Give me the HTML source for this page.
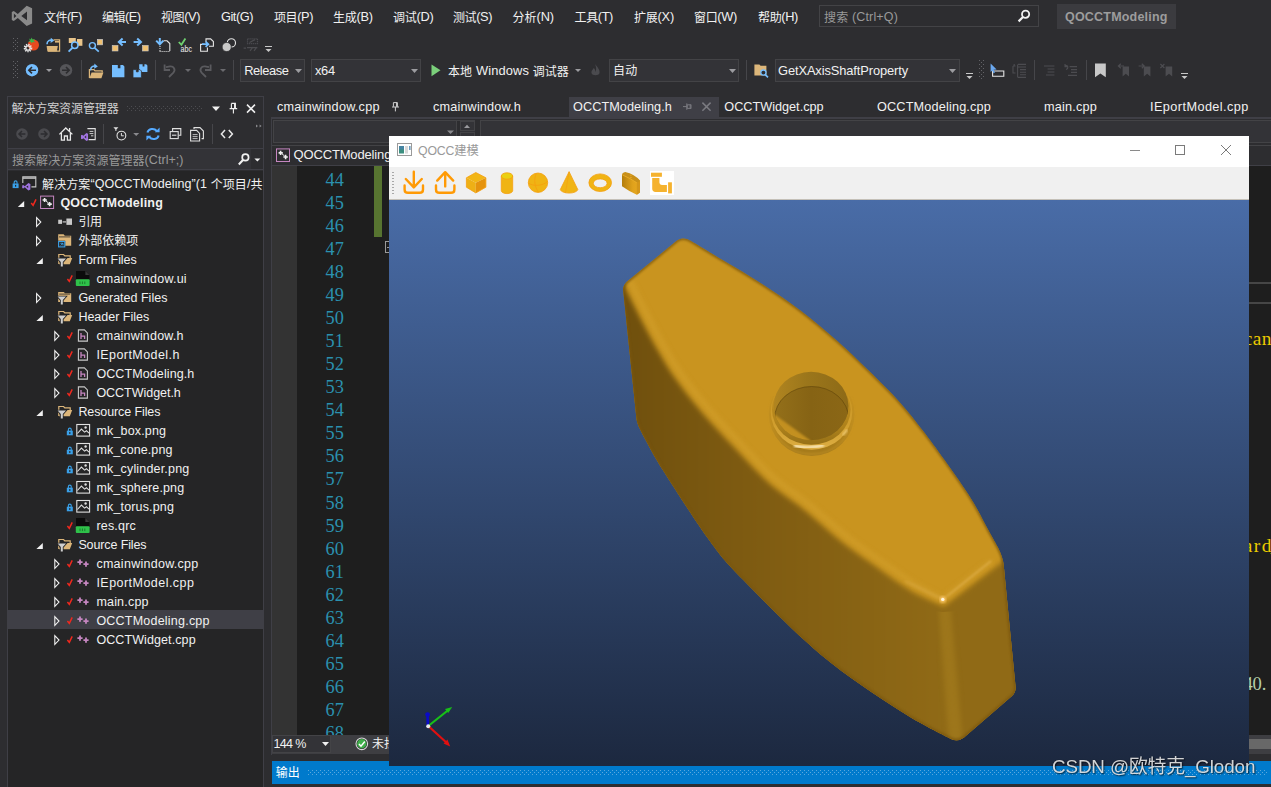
<!DOCTYPE html>
<html lang="zh-CN">
<head>
<meta charset="utf-8">
<title>QOCCTModeling - Microsoft Visual Studio</title>
<style>
html,body{margin:0;padding:0;}
body{width:1271px;height:787px;overflow:hidden;background:#2d2d30;position:relative;
  font-family:"Liberation Sans","Noto Sans CJK SC",sans-serif;font-size:12px;color:#f1f1f1;}
.abs{position:absolute;}
.t{position:absolute;white-space:nowrap;line-height:16px;height:16px;}
svg{position:absolute;overflow:visible;}
/* menu */
#menubar .t{top:8px;font-size:12px;color:#f1f1f1;}
/* tree */
#tree .t{font-size:12.5px;color:#f1f1f1;}
.ln{position:absolute;left:300px;width:44px;text-align:right;font-family:"Liberation Serif",serif;font-size:18.3px;letter-spacing:0.1px;line-height:23px;height:23px;color:#2b91af;}
</style>
</head>
<body>
<div id="menubar">
<svg style="left:0;top:0" width="40" height="32" viewBox="0 0 40 32"><path fill="#8a8a8a" fill-rule="evenodd" d="M26.7 5.7 L32.1 8.3 L32.1 23.6 L26.7 26.1 L17.8 17.9 L13.8 21 L11.8 20 L11.8 11.9 L13.8 10.9 L17.8 14 Z M27 11.6 L27 20.3 L21.3 15.95 Z M13.9 13.6 L13.9 18.3 L16.4 15.95 Z"/></svg><div class="abs" style="left:819px;top:5px;width:218px;height:20px;border:1px solid #434346;background:#2d2d30;"></div>
<svg style="left:1017px;top:9px" width="14" height="14" viewBox="0 0 14 14"><circle cx="8.6" cy="5.2" r="3.6" fill="none" stroke="#f1f1f1" stroke-width="1.8"/><path d="M6.2 7.8 L1.6 12.4" stroke="#f1f1f1" stroke-width="2.2"/></svg>
<div class="abs" style="left:1057px;top:4px;width:119px;height:25px;background:#3b3b3f;"></div><div class="t" style="left:44.0px;top:8.1px;font-size:12.8px;line-height:18px;height:18px;color:#f1f1f1;letter-spacing:-0.552px;"><span style="font-size:12px;position:relative;top:1px">文件</span>(F)</div>
<div class="t" style="left:102.0px;top:8.1px;font-size:12.8px;line-height:18px;height:18px;color:#f1f1f1;letter-spacing:-0.516px;"><span style="font-size:12px;position:relative;top:1px">编辑</span>(E)</div>
<div class="t" style="left:161.0px;top:8.1px;font-size:12.8px;line-height:18px;height:18px;color:#f1f1f1;letter-spacing:-0.416px;"><span style="font-size:12px;position:relative;top:1px">视图</span>(V)</div>
<div class="t" style="left:221.0px;top:7.7px;font-size:12.8px;line-height:18px;height:18px;color:#f1f1f1;letter-spacing:-0.474px;">Git(G)</div>
<div class="t" style="left:274.0px;top:8.1px;font-size:12.8px;line-height:18px;height:18px;color:#f1f1f1;letter-spacing:-0.416px;"><span style="font-size:12px;position:relative;top:1px">项目</span>(P)</div>
<div class="t" style="left:333.0px;top:8.1px;font-size:12.8px;line-height:18px;height:18px;color:#f1f1f1;letter-spacing:-0.296px;"><span style="font-size:12px;position:relative;top:1px">生成</span>(B)</div>
<div class="t" style="left:393.0px;top:8.1px;font-size:12.8px;line-height:18px;height:18px;color:#f1f1f1;letter-spacing:-0.256px;"><span style="font-size:12px;position:relative;top:1px">调试</span>(D)</div>
<div class="t" style="left:453.0px;top:8.1px;font-size:12.8px;line-height:18px;height:18px;color:#f1f1f1;letter-spacing:-0.416px;"><span style="font-size:12px;position:relative;top:1px">测试</span>(S)</div>
<div class="t" style="left:512.6px;top:8.1px;font-size:12.8px;line-height:18px;height:18px;color:#f1f1f1;letter-spacing:-0.076px;"><span style="font-size:12px;position:relative;top:1px">分析</span>(N)</div>
<div class="t" style="left:574.5px;top:8.1px;font-size:12.8px;line-height:18px;height:18px;color:#f1f1f1;letter-spacing:-0.372px;"><span style="font-size:12px;position:relative;top:1px">工具</span>(T)</div>
<div class="t" style="left:634.0px;top:8.1px;font-size:12.8px;line-height:18px;height:18px;color:#f1f1f1;letter-spacing:-0.216px;"><span style="font-size:12px;position:relative;top:1px">扩展</span>(X)</div>
<div class="t" style="left:694.0px;top:8.1px;font-size:12.8px;line-height:18px;height:18px;color:#f1f1f1;letter-spacing:-0.325px;"><span style="font-size:12px;position:relative;top:1px">窗口</span>(W)</div>
<div class="t" style="left:758.0px;top:8.1px;font-size:12.8px;line-height:18px;height:18px;color:#f1f1f1;letter-spacing:-0.356px;"><span style="font-size:12px;position:relative;top:1px">帮助</span>(H)</div>
<div class="t" style="left:824.0px;top:7.5px;font-size:12.5px;line-height:18px;height:18px;color:#999999;letter-spacing:0.156px;"><span style="font-size:12px;position:relative;top:1px">搜索</span> (Ctrl+Q)</div>
<div class="t" style="left:1065.0px;top:7.5px;font-size:12.5px;line-height:18px;height:18px;color:#9d9d9d;letter-spacing:0.200px;font-weight:bold;">QOCCTModeling</div>
</div>

<div id="toolbars">
<svg style="left:12.5px;top:38px" width="5" height="14" fill="#636367"><rect x="0" y="0" width="1" height="1"/><rect x="4" y="0" width="1" height="1"/><rect x="2" y="2" width="1" height="1"/><rect x="0" y="4" width="1" height="1"/><rect x="4" y="4" width="1" height="1"/><rect x="2" y="6" width="1" height="1"/><rect x="0" y="8" width="1" height="1"/><rect x="4" y="8" width="1" height="1"/><rect x="2" y="10" width="1" height="1"/><rect x="0" y="12" width="1" height="1"/><rect x="4" y="12" width="1" height="1"/></svg>
<svg style="left:12.5px;top:61px" width="5" height="18" fill="#636367"><rect x="0" y="0" width="1" height="1"/><rect x="4" y="0" width="1" height="1"/><rect x="2" y="2" width="1" height="1"/><rect x="0" y="4" width="1" height="1"/><rect x="4" y="4" width="1" height="1"/><rect x="2" y="6" width="1" height="1"/><rect x="0" y="8" width="1" height="1"/><rect x="4" y="8" width="1" height="1"/><rect x="2" y="10" width="1" height="1"/><rect x="0" y="12" width="1" height="1"/><rect x="4" y="12" width="1" height="1"/><rect x="2" y="14" width="1" height="1"/><rect x="0" y="16" width="1" height="1"/><rect x="4" y="16" width="1" height="1"/></svg>
<div class="abs" style="left:240px;top:59px;width:63px;height:21px;border:1px solid #434346;background:#333337;"></div><svg style="left:294.5px;top:69px" width="7" height="4"><path d="M0 0H7L3.5 4Z" fill="#9c9ca0"/></svg>
<div class="abs" style="left:311px;top:59px;width:107.5px;height:21px;border:1px solid #434346;background:#333337;"></div><svg style="left:410.5px;top:69px" width="7" height="4"><path d="M0 0H7L3.5 4Z" fill="#9c9ca0"/></svg>
<div class="abs" style="left:609px;top:59px;width:127.5px;height:21px;border:1px solid #434346;background:#333337;"></div><svg style="left:728.5px;top:69px" width="7" height="4"><path d="M0 0H7L3.5 4Z" fill="#9c9ca0"/></svg>
<div class="abs" style="left:775px;top:59px;width:183px;height:21px;border:1px solid #434346;background:#333337;"></div><svg style="left:949.0px;top:69px" width="7" height="4"><path d="M0 0H7L3.5 4Z" fill="#9c9ca0"/></svg>
<div class="abs" style="left:81px;top:60px;width:1px;height:20px;background:#46464a;"></div>
<div class="abs" style="left:155px;top:60px;width:1px;height:20px;background:#46464a;"></div>
<div class="abs" style="left:233px;top:60px;width:1px;height:20px;background:#46464a;"></div>
<div class="abs" style="left:746px;top:60px;width:1px;height:20px;background:#46464a;"></div>
<div class="abs" style="left:1034px;top:60px;width:1px;height:20px;background:#46464a;"></div>
<div class="abs" style="left:1086px;top:60px;width:1px;height:20px;background:#46464a;"></div>
<svg style="left:46px;top:69px" width="6" height="3"><path d="M0 0H6L3 3Z" fill="#9c9ca0"/></svg>
<svg style="left:185px;top:69px" width="6" height="3"><path d="M0 0H6L3 3Z" fill="#6a6a6e"/></svg>
<svg style="left:220px;top:69px" width="6" height="3"><path d="M0 0H6L3 3Z" fill="#6a6a6e"/></svg>
<svg style="left:575px;top:69px" width="6" height="3"><path d="M0 0H6L3 3Z" fill="#9c9ca0"/></svg>
<svg style="left:265px;top:46px" width="7" height="7"><path d="M0 0.5H7" stroke="#c8c8c8"/><path d="M0.5 3H6.5L3.5 6Z" fill="#c8c8c8"/></svg>
<svg style="left:966px;top:73px" width="7" height="7"><path d="M0 0.5H7" stroke="#c8c8c8"/><path d="M0.5 3H6.5L3.5 6Z" fill="#c8c8c8"/></svg>
<svg style="left:1181px;top:73px" width="7" height="7"><path d="M0 0.5H7" stroke="#c8c8c8"/><path d="M0.5 3H6.5L3.5 6Z" fill="#c8c8c8"/></svg>
<svg style="left:978.5px;top:60px" width="5" height="20" fill="#636367"><rect x="0" y="0" width="1" height="1"/><rect x="4" y="0" width="1" height="1"/><rect x="2" y="2" width="1" height="1"/><rect x="0" y="4" width="1" height="1"/><rect x="4" y="4" width="1" height="1"/><rect x="2" y="6" width="1" height="1"/><rect x="0" y="8" width="1" height="1"/><rect x="4" y="8" width="1" height="1"/><rect x="2" y="10" width="1" height="1"/><rect x="0" y="12" width="1" height="1"/><rect x="4" y="12" width="1" height="1"/><rect x="2" y="14" width="1" height="1"/><rect x="0" y="16" width="1" height="1"/><rect x="4" y="16" width="1" height="1"/><rect x="2" y="18" width="1" height="1"/></svg>
<svg style="left:431px;top:64px" width="10" height="13"><path d="M0.5 0.5L9.5 6.3L0.5 12.2Z" fill="#7bd07b"/></svg>
<svg style="left:590px;top:63px" width="11" height="14" viewBox="0 0 11 14"><path d="M5 1C7 4 10 6 9.5 10C9 13 2 13 1.5 10C1 7.5 3 7 3.5 5C5 6 5.5 7.5 5 9C7 7 6 3.5 5 1Z" fill="#4a4a4e"/></svg>
<svg id="tbicons" style="left:0;top:32px" width="1271" height="56" viewBox="0 32 1271 56">
<g fill="none" stroke-linejoin="miter">
<!-- tomato -->
<circle cx="33.4" cy="45" r="5.6" fill="#e8491f"/>
<path d="M31.6 37.5 L32.6 39.6 L35.2 39 L33.4 40.8 L35.6 42.2 L32.6 42 L31.6 43.6 L30.8 41.8 L28 41.6 L30.2 40.4 L28.8 38.6 L30.8 39.4 Z" fill="#3cb44a"/>
<circle cx="28" cy="48" r="3.3" fill="none" stroke="#e6e6e6" stroke-width="2" stroke-dasharray="1.3 0.9"/>
<circle cx="28" cy="48" r="2.2" fill="none" stroke="#e6e6e6" stroke-width="1.3"/>
<!-- folder w/ arrow (row1) -->
<path d="M53.5 39.8 H59.6 V51.2 H48" stroke="#dcb67a" stroke-width="1.2"/>
<path d="M55 41 H59 V42.6 H55Z" fill="#dcb67a"/>
<path d="M46.6 46 H57.8 L56.8 51.6 H47.4 Z" fill="#dcb67a"/>
<path d="M47 44.2 C47 40.6 50 39.6 52.6 40.4" stroke="#75beff" stroke-width="1.6"/>
<path d="M50.8 37.8 L54.2 40.6 L50.6 43 Z" fill="#75beff"/>
<!-- find in files -->
<rect x="68.8" y="38" width="7" height="5" fill="#e8c48a"/>
<rect x="77" y="39" width="5.4" height="6.8" fill="#e8c48a"/>
<circle cx="74.8" cy="45.2" r="3.2" stroke="#75beff" stroke-width="1.5" fill="#2d2d30"/>
<path d="M72.4 47.8 L68.6 51.6" stroke="#75beff" stroke-width="1.9"/>
<!-- small search -->
<rect x="97.4" y="39.4" width="5.2" height="5.4" fill="#f0c070" stroke="#c8c8c8" stroke-width="0.7"/>
<circle cx="92.4" cy="45.6" r="3" stroke="#75beff" stroke-width="1.4"/>
<path d="M94.6 47.9 L98.8 51.6" stroke="#75beff" stroke-width="1.8"/>
<!-- nav back -->
<rect x="112.2" y="45.4" width="5.8" height="5.6" fill="#f0c070" stroke="#c8c8c8" stroke-width="0.6"/>
<path d="M126 42 H119.5 M122.6 38.4 L118.8 42 L122.6 45.6" stroke="#75beff" stroke-width="2"/>
<!-- nav fwd -->
<rect x="142.4" y="45.4" width="5.8" height="5.6" fill="#f0c070" stroke="#c8c8c8" stroke-width="0.6"/>
<path d="M133.6 42 H140.2 M137.2 38.4 L141 42 L137.2 45.6" stroke="#75beff" stroke-width="2"/>
<!-- blue down arrow + page -->
<path d="M159.8 38 V43.6 M156.2 40.6 L159.8 44.4 L163.4 40.6" stroke="#75beff" stroke-width="2"/>
<path d="M163.6 40.8 H167 L169.8 43.6 V51" stroke="#e6e6e6" stroke-width="1.1"/>
<path d="M159.6 51.5 H170" stroke="#e6e6e6" stroke-width="1" stroke-dasharray="1 1"/>
<path d="M160 46 V51" stroke="#e6e6e6" stroke-width="1" stroke-dasharray="1 1"/>
<!-- check abc -->
<path d="M178.8 42 L181.4 44.8 L185.4 38.4" stroke="#6fd070" stroke-width="1.8"/>
<!-- copy w/ arrow -->
<path d="M206 42 V38.9 H210.6 L213.4 41.6 V46.2 H209" stroke="#e6e6e6" stroke-width="1.1"/>
<path d="M204 44.4 H200.6 V51.3 H207.4 V47.6" stroke="#e6e6e6" stroke-width="1.1"/>
<path d="M202 44.2 H207.6 M205.6 41.6 L208.4 44.2 L205.6 46.8" stroke="#75beff" stroke-width="1.7"/>
<!-- circles -->
<circle cx="231.4" cy="42.9" r="4.1" stroke="#e6e6e6" stroke-width="1.1"/>
<circle cx="226.7" cy="47" r="4.6" fill="#c8c8c8" stroke="#2d2d30" stroke-width="0.8"/>
<!-- disabled icon -->
<g stroke="#4c4c50" stroke-width="1.2">
<path d="M247.5 38.8 H257.5 V43.6 H247.5 Z" stroke-dasharray="1.2 0.8"/>
<path d="M249.5 42.5 L255 39.6 M250 50.8 L253 47 M254 50.8 L257 47 M243.6 48.2 L246 48.2 M247 47.6 H257.4"/>
</g>
<!-- row 2 -->
<circle cx="32" cy="70.2" r="6.2" fill="#75beff"/>
<path d="M36 70.2 H29.4 M32 67 L28.8 70.2 L32 73.4" stroke="#2d2d30" stroke-width="1.6"/>
<circle cx="66" cy="70.2" r="6.2" fill="#555559"/>
<path d="M62 70.2 H68.6 M66 67 L69.2 70.2 L66 73.4" stroke="#2d2d30" stroke-width="1.6"/>
<!-- open folder -->
<path d="M89.4 78 V69.6 H94 L95 70.8 H102.2 V72.4" stroke="#dcb67a" stroke-width="1.2"/>
<path d="M91.6 72.6 H103.4 L101.4 78.2 H89.4 Z" fill="#dcb67a"/>
<path d="M90.6 70.4 C90.4 66.6 93.4 65.6 96 66.2" stroke="#75beff" stroke-width="1.6"/>
<path d="M94.4 63.6 L97.8 66.4 L94.2 68.8 Z" fill="#75beff"/>
<!-- save -->
<path d="M112 65 H117.8 V68.2 H120.4 V65 H123 L124.4 66.4 V77.2 H112 Z" fill="#75beff"/>
<!-- save all -->
<path d="M139.2 64.2 H142.6 V66.4 H144.4 V64.2 H146.2 L147.4 65.4 V72 H139.2 Z" fill="#75beff"/>
<path d="M133 69.6 H136.4 V71.8 H138.2 V69.6 H140 L141.4 71 V77.8 H133 Z" fill="#75beff" stroke="#2d2d30" stroke-width="0.8"/>
<!-- undo / redo -->
<path d="M169 77 L173.4 72.6 C176 69.6 173.6 66 170 66.4 L166 67.2" stroke="#5a5a5e" stroke-width="1.8"/>
<path d="M164.6 64.4 V70 H170" stroke="#5a5a5e" stroke-width="1.8"/>
<path d="M206 77 L201.6 72.6 C199 69.6 201.4 66 205 66.4 L209 67.2" stroke="#5a5a5e" stroke-width="1.8"/>
<path d="M210.6 64.4 V70 H205" stroke="#5a5a5e" stroke-width="1.8"/>
<!-- folder search (row2 right) -->
<path d="M754.4 64.4 H759.4 L760.6 65.8 H766.4 V75.4 H754.4 Z" fill="#dcb67a"/>
<circle cx="763.4" cy="72.6" r="2.6" fill="#2d2d30" stroke="#75beff" stroke-width="1.3"/>
<path d="M765.2 74.6 L768 77.4" stroke="#75beff" stroke-width="1.6"/>
<!-- cursor + box -->
<path d="M992.6 71 H1003.8 V76.2 H992.6 Z" stroke="#e6e6e6" stroke-width="1.1"/>
<path d="M990.6 63.4 L996.6 69.6 L993.6 69.8 L995 72.6 L993.6 73.2 L992.2 70.4 L990.6 72 Z" fill="#6aa8f0"/>
<!-- dim icons -->
<g stroke="#4c4c50" stroke-width="1.1">
<path d="M1013 66 V73 H1015.5 M1013 66 H1015.5 M1014.2 64 V66"/>
<path d="M1018 64.4 H1026 M1018 67 H1026 M1020 69.6 H1026 M1020 72.2 H1026 M1020 74.8 H1026 M1018 77.4 H1026 M1017.6 64.4 V77.4"/>
<path d="M1044 66 H1054.4 M1047.6 69 H1054.4 M1047.6 72 H1054.4 M1046 75 H1054.4"/>
<path d="M1069.6 66.6 H1077 M1071 69.6 H1077 M1071 72.4 H1077 M1068 75.4 H1077"/>
<path d="M1065.2 65.4 C1068.6 65 1068.6 68.6 1066 69.6 M1065 64 V66.6 H1067.4"/>
</g>
<!-- bookmarks -->
<path d="M1095 63.6 H1105.8 V77.2 L1100.4 73.4 L1095 77.2 Z" fill="#c8c8c8"/>
<g fill="#4c4c50" stroke="none">
<path d="M1122.6 66.4 H1129 V76.4 L1125.8 73.8 L1122.6 76.4 Z"/>
<path d="M1143.8 66.4 H1150.4 V76.4 L1147.2 73.8 L1143.8 76.4 Z"/>
<path d="M1165.6 66.4 H1172.2 V76.4 L1169 73.8 L1165.6 76.4 Z"/>
</g>
<g stroke="#4c4c50" stroke-width="1.2">
<path d="M1124 66 H1118.6 M1120.8 63.8 L1118.4 66 L1120.8 68.2"/>
<path d="M1138.6 66 H1144 M1141.8 63.8 L1144.2 66 L1141.8 68.2"/>
<path d="M1160.4 64 L1164.4 68 M1164.4 64 L1160.4 68"/>
</g>
</g>
<text x="180.6" y="51.6" font-family="Liberation Sans,sans-serif" font-size="8.4" fill="#f0f0f0" textLength="11.4" lengthAdjust="spacingAndGlyphs">abc</text>
</svg>

<div class="t" style="left:244.2px;top:61.7px;font-size:12.9px;line-height:18px;height:18px;color:#f1f1f1;letter-spacing:-0.428px;">Release</div>
<div class="t" style="left:315.0px;top:61.7px;font-size:12.9px;line-height:18px;height:18px;color:#f1f1f1;letter-spacing:-0.366px;">x64</div>
<div class="t" style="left:448.0px;top:62.1px;font-size:12.9px;line-height:18px;height:18px;color:#f1f1f1;letter-spacing:0.107px;"><span style="font-size:12px;position:relative;top:1px">本地</span> Windows <span style="font-size:12px;position:relative;top:1px">调试器</span></div>
<div class="t" style="left:613.0px;top:63.1px;font-size:12px;line-height:17px;height:17px;color:#f1f1f1;letter-spacing:0.142px;">自动</div>
<div class="t" style="left:778.0px;top:61.7px;font-size:12.9px;line-height:18px;height:18px;color:#f1f1f1;letter-spacing:-0.121px;">GetXAxisShaftProperty</div>
</div>

<div id="tree">
<div class="abs" style="left:7px;top:96px;width:257px;height:700px;border:1px solid #3f3f46;border-bottom:none;box-sizing:border-box;background:#2d2d30;"></div>
<div class="abs" style="left:8px;top:171px;width:255px;height:616px;background:#252526;"></div>
<svg style="left:127px;top:106px" width="76" height="5" fill="#4c4c50"><rect x="0" y="0" width="1" height="1"/><rect x="4" y="0" width="1" height="1"/><rect x="8" y="0" width="1" height="1"/><rect x="12" y="0" width="1" height="1"/><rect x="16" y="0" width="1" height="1"/><rect x="20" y="0" width="1" height="1"/><rect x="24" y="0" width="1" height="1"/><rect x="28" y="0" width="1" height="1"/><rect x="32" y="0" width="1" height="1"/><rect x="36" y="0" width="1" height="1"/><rect x="40" y="0" width="1" height="1"/><rect x="44" y="0" width="1" height="1"/><rect x="48" y="0" width="1" height="1"/><rect x="52" y="0" width="1" height="1"/><rect x="56" y="0" width="1" height="1"/><rect x="60" y="0" width="1" height="1"/><rect x="64" y="0" width="1" height="1"/><rect x="68" y="0" width="1" height="1"/><rect x="72" y="0" width="1" height="1"/><rect x="0" y="4" width="1" height="1"/><rect x="4" y="4" width="1" height="1"/><rect x="8" y="4" width="1" height="1"/><rect x="12" y="4" width="1" height="1"/><rect x="16" y="4" width="1" height="1"/><rect x="20" y="4" width="1" height="1"/><rect x="24" y="4" width="1" height="1"/><rect x="28" y="4" width="1" height="1"/><rect x="32" y="4" width="1" height="1"/><rect x="36" y="4" width="1" height="1"/><rect x="40" y="4" width="1" height="1"/><rect x="44" y="4" width="1" height="1"/><rect x="48" y="4" width="1" height="1"/><rect x="52" y="4" width="1" height="1"/><rect x="56" y="4" width="1" height="1"/><rect x="60" y="4" width="1" height="1"/><rect x="64" y="4" width="1" height="1"/><rect x="68" y="4" width="1" height="1"/><rect x="72" y="4" width="1" height="1"/><rect x="2" y="2" width="1" height="1"/><rect x="6" y="2" width="1" height="1"/><rect x="10" y="2" width="1" height="1"/><rect x="14" y="2" width="1" height="1"/><rect x="18" y="2" width="1" height="1"/><rect x="22" y="2" width="1" height="1"/><rect x="26" y="2" width="1" height="1"/><rect x="30" y="2" width="1" height="1"/><rect x="34" y="2" width="1" height="1"/><rect x="38" y="2" width="1" height="1"/><rect x="42" y="2" width="1" height="1"/><rect x="46" y="2" width="1" height="1"/><rect x="50" y="2" width="1" height="1"/><rect x="54" y="2" width="1" height="1"/><rect x="58" y="2" width="1" height="1"/><rect x="62" y="2" width="1" height="1"/><rect x="66" y="2" width="1" height="1"/><rect x="70" y="2" width="1" height="1"/><rect x="74" y="2" width="1" height="1"/></svg>
<svg style="left:212px;top:102px" width="48" height="14" viewBox="212 102 48 14" fill="none"><path d="M212 106.6H220L216 111Z" fill="#f1f1f1"/><path d="M231.4 103.4H235.4V108.4M231.4 103.4V108.4M229.6 108.6H237.2M233.4 108.6V113.4M234.6 103.4V108.4" stroke="#f1f1f1" stroke-width="1.1"/><path d="M247 104.6L255 112.6M255 104.6L247 112.6" stroke="#f1f1f1" stroke-width="1.5"/></svg>
<svg style="left:8px;top:120px" width="256" height="28" viewBox="8 120 256 28" fill="none">
<circle cx="22" cy="134" r="5.8" fill="#4a4a4e"/><path d="M25.4 134H19.4M22 131L19 134L22 137" stroke="#2d2d30" stroke-width="1.5"/>
<circle cx="44" cy="134" r="5.8" fill="#4a4a4e"/><path d="M40.6 134H46.6M44 131L47 134L44 137" stroke="#2d2d30" stroke-width="1.5"/>
<path d="M59.4 134.4L65.8 128L72.4 134.4M61.4 133V140.2H64.4V136H67.4V140.2H70.4V133M69.6 128V131" stroke="#e8e8e8" stroke-width="1.3"/>
<path d="M87.4 128.6H95.2V139.6H88.6" stroke="#e0e0e0" stroke-width="1.1"/><path d="M89.6 131.4H93.4M89.6 133.6H93.4M91 135.8H93.4" stroke="#e0e0e0" stroke-width="0.9"/>
<path d="M86.4 133L88 133.8V140.2L86.4 141L83.4 138.2L82 139.2L81 138.8V135.2L82 134.8L83.4 135.8Z M86.2 135.4L84.4 137L86.2 138.6Z" fill="#a074e0" fill-rule="evenodd"/>
<path d="M103.5 124V144M212.5 124V144" stroke="#46464a"/>
<path d="M113.4 127.2H118.4L116.4 129.4V131H115.4V129.4Z" fill="#e0e0e0"/>
<circle cx="121.4" cy="135.6" r="4.4" stroke="#e0e0e0" stroke-width="1.1"/><path d="M121.4 133V135.8H123.8" stroke="#e0e0e0" stroke-width="1"/>
<path d="M133.2 133H139.2L136.2 136Z" fill="#8a8a8e"/>
<path d="M147.4 132.6C148.4 128.6 154 127.6 156.8 131M158.6 135.4C157.6 139.4 152 140.4 149.2 137" stroke="#55aaff" stroke-width="2"/><path d="M159.6 127.4V132.2H154.8Z M146.4 140.6V135.8H151.2Z" fill="#55aaff"/>
<path d="M172.6 131V128.6H180.8V135.2H178.6" stroke="#e0e0e0" stroke-width="1.1"/><rect x="170.2" y="131.6" width="8" height="7" stroke="#e0e0e0" stroke-width="1.1"/><path d="M172 135.2H176.4" stroke="#e0e0e0" stroke-width="1.1"/>
<path d="M194 129V127.6H200L203.4 131V138.6H201.6" stroke="#e0e0e0" stroke-width="1.1"/><path d="M190.6 130.4H196.6L199.6 133.4V141H190.6Z" stroke="#e0e0e0" stroke-width="1.1"/><path d="M192.6 134.6H197.6M192.6 136.6H197.6M192.6 138.6H197.6" stroke="#e0e0e0" stroke-width="0.8"/>
<path d="M225 130L221.4 134L225 138M228.8 130L232.4 134L228.8 138" stroke="#e8e8e8" stroke-width="1.5"/>
<path d="M256 124.4L258 126L256 127.6ZM259.6 124.4L261.6 126L259.6 127.6Z" fill="#8a8a8e"/>
</svg>
<div class="abs" style="left:8px;top:148px;width:255px;height:22px;border:1px solid #3f3f46;border-left:none;border-right:none;box-sizing:border-box;background:#2d2d30;"></div><div class="abs" style="left:8px;top:149px;width:243px;height:20px;background:#333337;"></div>
<svg style="left:236px;top:152px" width="26" height="16" viewBox="236 152 26 16" fill="none"><circle cx="245.4" cy="157.4" r="3.2" stroke="#f1f1f1" stroke-width="1.7"/><path d="M243.2 159.8L238.8 164.4" stroke="#f1f1f1" stroke-width="2.1"/><path d="M254.4 158.6H260.4L257.4 161.6Z" fill="#f1f1f1"/></svg>
<div class="abs" style="left:8px;top:610px;width:256px;height:19px;background:#3f3f46;"></div>
<svg style="left:0;top:170px" width="264" height="617" viewBox="0 170 264 617" fill="none">
<path d="M14.2 183.7V182.1C14.2 180.5 17.0 180.5 17.0 182.1V183.7" stroke="#3aa0e8" stroke-width="1.1"/><rect x="12.6" y="183.5" width="6" height="4.6" fill="#3aa0e8"/><rect x="15.0" y="184.9" width="1.2" height="1.8" fill="#252526"/>
<path d="M22.8 182.9V176.9H35.8V186.9H31.4" stroke="#c8c8c8" stroke-width="1.1"/><path d="M22.8 178.1H35.8" stroke="#c8c8c8" stroke-width="1.4"/>
<path d="M28.4 183.1L30.4 184.1V189.5L28.4 190.5L24.8 187.3L23.2 188.5L22.2 188.1V185.5L23.2 185.1L24.8 186.3Z M28.2 185.5L26.2 186.8L28.2 188.1Z" fill="#a074e0" fill-rule="evenodd"/>
<path d="M24.200000000000003 200.9V207.1H17.8Z" fill="#f1f1f1"/>
<path d="M31.2 203.1L33.1 205.3L36.0 199.3" stroke="#f0281e" stroke-width="1.5"/>
<rect x="40.6" y="196.1" width="13" height="12.4" stroke="#c586c0" stroke-width="1"/><path d="M44.6 197.9V202.1M42.6 200.0H46.8M49.6 201.9V206.3M47.4 204.1H51.8" stroke="#f1f1f1" stroke-width="1.6"/><path d="M46 200.9L48.6 203.1" stroke="#f1f1f1" stroke-width="1"/>
<path d="M36.6 217.7L40.8 222.1L36.6 226.5Z" stroke="#f1f1f1" stroke-width="1.1"/>
<rect x="58.2" y="219.7" width="3.8" height="4.2" fill="#c8c8c8"/><path d="M62.6 221.9H66" stroke="#c8c8c8" stroke-width="1.2"/><rect x="66.4" y="218.5" width="5.6" height="6.4" fill="#c8c8c8"/>
<path d="M36.6 236.7L40.8 241.1L36.6 245.5Z" stroke="#f1f1f1" stroke-width="1.1"/>
<path d="M58.2 234.3H63.6L64.8 235.7H71.2V245.7H58.2Z" fill="#dcb67a"/><path d="M59 236.9H70.4" stroke="#252526" stroke-width="0.8"/><rect x="57.6" y="240.7" width="7.6" height="6.6" fill="#252526"/><rect x="58.6" y="241.5" width="6.2" height="5.4" stroke="#3aa0e8" stroke-width="1.1"/><path d="M60.4 243.3H63V245.5M63 243.3L60.6 245.5" stroke="#3aa0e8" stroke-width="0.9"/>
<path d="M42.8 257.9V264.1H36.4Z" fill="#f1f1f1"/>
<path d="M58.800000000000004 264.1V254.5H63.6L64.8 255.9H70.2V257.9" stroke="#dcb67a" stroke-width="1.2"/><path d="M61.2 258.1H72.2L69.8 264.3H59.2Z" fill="#dcb67a"/><path d="M57.6 258.5H66.0L62.800000000000004 262.1V266.5H60.800000000000004V262.1Z" fill="#cfcfcf" stroke="#252526" stroke-width="1.6" paint-order="stroke"/>
<path d="M67.4 279.1L69.3 281.3L72.2 275.3" stroke="#f0281e" stroke-width="1.5"/>
<path d="M76 271.1H85.4L89.4 274.9V279.5H76Z" fill="#0c0c0c"/><path d="M85.4 271.1V274.9H89.4Z" fill="#3a3a3a"/><rect x="75.8" y="279.3" width="13.8" height="6.8" rx="1" fill="#2fc24a"/><path d="M80 281.5V284.1M82.4 281.5V284.1M84.8 281.5V284.1" stroke="#1a7a2c" stroke-width="1"/>
<path d="M36.6 293.70000000000005L40.8 298.1L36.6 302.5Z" stroke="#f1f1f1" stroke-width="1.1"/>
<path d="M58.2 291.9H63.800000000000004L65.0 293.3H71.2V302.1H58.2Z" fill="#dcb67a"/><path d="M59.2 294.1H70.2" stroke="#252526" stroke-width="0.8"/><path d="M57.6 296.5H66.0L62.800000000000004 300.1V304.5H60.800000000000004V300.1Z" fill="#cfcfcf" stroke="#252526" stroke-width="1.6" paint-order="stroke"/>
<path d="M42.8 314.9V321.1H36.4Z" fill="#f1f1f1"/>
<path d="M58.800000000000004 321.1V311.5H63.6L64.8 312.9H70.2V314.9" stroke="#dcb67a" stroke-width="1.2"/><path d="M61.2 315.1H72.2L69.8 321.3H59.2Z" fill="#dcb67a"/><path d="M57.6 315.5H66.0L62.800000000000004 319.1V323.5H60.800000000000004V319.1Z" fill="#cfcfcf" stroke="#252526" stroke-width="1.6" paint-order="stroke"/>
<path d="M54.800000000000004 331.70000000000005L59.0 336.1L54.800000000000004 340.5Z" stroke="#f1f1f1" stroke-width="1.1"/>
<path d="M67.4 336.1L69.3 338.3L72.2 332.3" stroke="#f0281e" stroke-width="1.5"/>
<path d="M78.4 329.9H84.4L87.4 332.9V341.1H78.4Z" stroke="#c8c8c8" stroke-width="1.1"/><path d="M81 332.9V338.9M81 336.1H84.6V338.9" stroke="#c586c0" stroke-width="1.3"/>
<path d="M54.800000000000004 350.70000000000005L59.0 355.1L54.800000000000004 359.5Z" stroke="#f1f1f1" stroke-width="1.1"/>
<path d="M67.4 355.1L69.3 357.3L72.2 351.3" stroke="#f0281e" stroke-width="1.5"/>
<path d="M78.4 348.9H84.4L87.4 351.9V360.1H78.4Z" stroke="#c8c8c8" stroke-width="1.1"/><path d="M81 351.9V357.9M81 355.1H84.6V357.9" stroke="#c586c0" stroke-width="1.3"/>
<path d="M54.800000000000004 369.70000000000005L59.0 374.1L54.800000000000004 378.5Z" stroke="#f1f1f1" stroke-width="1.1"/>
<path d="M67.4 374.1L69.3 376.3L72.2 370.3" stroke="#f0281e" stroke-width="1.5"/>
<path d="M78.4 367.9H84.4L87.4 370.9V379.1H78.4Z" stroke="#c8c8c8" stroke-width="1.1"/><path d="M81 370.9V376.9M81 374.1H84.6V376.9" stroke="#c586c0" stroke-width="1.3"/>
<path d="M54.800000000000004 388.70000000000005L59.0 393.1L54.800000000000004 397.5Z" stroke="#f1f1f1" stroke-width="1.1"/>
<path d="M67.4 393.1L69.3 395.3L72.2 389.3" stroke="#f0281e" stroke-width="1.5"/>
<path d="M78.4 386.9H84.4L87.4 389.9V398.1H78.4Z" stroke="#c8c8c8" stroke-width="1.1"/><path d="M81 389.9V395.9M81 393.1H84.6V395.9" stroke="#c586c0" stroke-width="1.3"/>
<path d="M42.8 409.9V416.1H36.4Z" fill="#f1f1f1"/>
<path d="M58.800000000000004 416.1V406.5H63.6L64.8 407.9H70.2V409.9" stroke="#dcb67a" stroke-width="1.2"/><path d="M61.2 410.1H72.2L69.8 416.3H59.2Z" fill="#dcb67a"/><path d="M57.6 410.5H66.0L62.800000000000004 414.1V418.5H60.800000000000004V414.1Z" fill="#cfcfcf" stroke="#252526" stroke-width="1.6" paint-order="stroke"/>
<path d="M68.39999999999999 430.90000000000003V429.3C68.39999999999999 427.7 71.2 427.7 71.2 429.3V430.90000000000003" stroke="#3aa0e8" stroke-width="1.1"/><rect x="66.8" y="430.7" width="6" height="4.6" fill="#3aa0e8"/><rect x="69.2" y="432.1" width="1.2" height="1.8" fill="#252526"/>
<rect x="76.8" y="424.5" width="12.8" height="11.6" stroke="#e0e0e0" stroke-width="1.1"/><path d="M77.4 433.5L81.4 429.1L84.6 432.1L86.4 430.7L89 433.1" stroke="#e0e0e0" stroke-width="1.1"/><circle cx="85.6" cy="427.5" r="1.2" fill="#e0e0e0"/>
<path d="M68.39999999999999 449.90000000000003V448.3C68.39999999999999 446.7 71.2 446.7 71.2 448.3V449.90000000000003" stroke="#3aa0e8" stroke-width="1.1"/><rect x="66.8" y="449.7" width="6" height="4.6" fill="#3aa0e8"/><rect x="69.2" y="451.1" width="1.2" height="1.8" fill="#252526"/>
<rect x="76.8" y="443.5" width="12.8" height="11.6" stroke="#e0e0e0" stroke-width="1.1"/><path d="M77.4 452.5L81.4 448.1L84.6 451.1L86.4 449.7L89 452.1" stroke="#e0e0e0" stroke-width="1.1"/><circle cx="85.6" cy="446.5" r="1.2" fill="#e0e0e0"/>
<path d="M68.39999999999999 468.90000000000003V467.3C68.39999999999999 465.7 71.2 465.7 71.2 467.3V468.90000000000003" stroke="#3aa0e8" stroke-width="1.1"/><rect x="66.8" y="468.7" width="6" height="4.6" fill="#3aa0e8"/><rect x="69.2" y="470.1" width="1.2" height="1.8" fill="#252526"/>
<rect x="76.8" y="462.5" width="12.8" height="11.6" stroke="#e0e0e0" stroke-width="1.1"/><path d="M77.4 471.5L81.4 467.1L84.6 470.1L86.4 468.7L89 471.1" stroke="#e0e0e0" stroke-width="1.1"/><circle cx="85.6" cy="465.5" r="1.2" fill="#e0e0e0"/>
<path d="M68.39999999999999 487.90000000000003V486.3C68.39999999999999 484.7 71.2 484.7 71.2 486.3V487.90000000000003" stroke="#3aa0e8" stroke-width="1.1"/><rect x="66.8" y="487.7" width="6" height="4.6" fill="#3aa0e8"/><rect x="69.2" y="489.1" width="1.2" height="1.8" fill="#252526"/>
<rect x="76.8" y="481.5" width="12.8" height="11.6" stroke="#e0e0e0" stroke-width="1.1"/><path d="M77.4 490.5L81.4 486.1L84.6 489.1L86.4 487.7L89 490.1" stroke="#e0e0e0" stroke-width="1.1"/><circle cx="85.6" cy="484.5" r="1.2" fill="#e0e0e0"/>
<path d="M68.39999999999999 506.90000000000003V505.3C68.39999999999999 503.7 71.2 503.7 71.2 505.3V506.90000000000003" stroke="#3aa0e8" stroke-width="1.1"/><rect x="66.8" y="506.7" width="6" height="4.6" fill="#3aa0e8"/><rect x="69.2" y="508.1" width="1.2" height="1.8" fill="#252526"/>
<rect x="76.8" y="500.5" width="12.8" height="11.6" stroke="#e0e0e0" stroke-width="1.1"/><path d="M77.4 509.5L81.4 505.1L84.6 508.1L86.4 506.7L89 509.1" stroke="#e0e0e0" stroke-width="1.1"/><circle cx="85.6" cy="503.5" r="1.2" fill="#e0e0e0"/>
<path d="M67.4 526.1L69.3 528.3L72.2 522.3" stroke="#f0281e" stroke-width="1.5"/>
<path d="M76 518.1H85.4L89.4 521.9V526.5H76Z" fill="#0c0c0c"/><path d="M85.4 518.1V521.9H89.4Z" fill="#3a3a3a"/><rect x="75.8" y="526.3" width="13.8" height="6.8" rx="1" fill="#2fc24a"/><path d="M80 528.5V531.1M82.4 528.5V531.1M84.8 528.5V531.1" stroke="#1a7a2c" stroke-width="1"/>
<path d="M42.8 542.9V549.1H36.4Z" fill="#f1f1f1"/>
<path d="M58.800000000000004 549.1V539.5H63.6L64.8 540.9H70.2V542.9" stroke="#dcb67a" stroke-width="1.2"/><path d="M61.2 543.1H72.2L69.8 549.3H59.2Z" fill="#dcb67a"/><path d="M57.6 543.5H66.0L62.800000000000004 547.1V551.5H60.800000000000004V547.1Z" fill="#cfcfcf" stroke="#252526" stroke-width="1.6" paint-order="stroke"/>
<path d="M54.800000000000004 559.7L59.0 564.1L54.800000000000004 568.5Z" stroke="#f1f1f1" stroke-width="1.1"/>
<path d="M67.4 564.1L69.3 566.3L72.2 560.3" stroke="#f0281e" stroke-width="1.5"/>
<path d="M80 559.5V564.7M77.4 562.1H82.6M86 561.5V566.7M83.4 564.1H88.6" stroke="#c586c0" stroke-width="1.8"/>
<path d="M54.800000000000004 578.7L59.0 583.1L54.800000000000004 587.5Z" stroke="#f1f1f1" stroke-width="1.1"/>
<path d="M67.4 583.1L69.3 585.3L72.2 579.3" stroke="#f0281e" stroke-width="1.5"/>
<path d="M80 578.5V583.7M77.4 581.1H82.6M86 580.5V585.7M83.4 583.1H88.6" stroke="#c586c0" stroke-width="1.8"/>
<path d="M54.800000000000004 597.7L59.0 602.1L54.800000000000004 606.5Z" stroke="#f1f1f1" stroke-width="1.1"/>
<path d="M67.4 602.1L69.3 604.3L72.2 598.3" stroke="#f0281e" stroke-width="1.5"/>
<path d="M80 597.5V602.7M77.4 600.1H82.6M86 599.5V604.7M83.4 602.1H88.6" stroke="#c586c0" stroke-width="1.8"/>
<path d="M54.800000000000004 616.7L59.0 621.1L54.800000000000004 625.5Z" stroke="#f1f1f1" stroke-width="1.1"/>
<path d="M67.4 621.1L69.3 623.3L72.2 617.3" stroke="#f0281e" stroke-width="1.5"/>
<path d="M80 616.5V621.7M77.4 619.1H82.6M86 618.5V623.7M83.4 621.1H88.6" stroke="#c586c0" stroke-width="1.8"/>
<path d="M54.800000000000004 635.7L59.0 640.1L54.800000000000004 644.5Z" stroke="#f1f1f1" stroke-width="1.1"/>
<path d="M67.4 640.1L69.3 642.3L72.2 636.3" stroke="#f0281e" stroke-width="1.5"/>
<path d="M80 635.5V640.7M77.4 638.1H82.6M86 637.5V642.7M83.4 640.1H88.6" stroke="#c586c0" stroke-width="1.8"/>
</svg>
<div class="t" style="left:11.4px;top:100.8px;font-size:12px;line-height:17px;height:17px;color:#d0d0d0;letter-spacing:-0.080px;">解决方案资源管理器</div>
<div class="t" style="left:12.0px;top:151.1px;font-size:12.5px;line-height:18px;height:18px;color:#999999;letter-spacing:0.055px;"><span style="font-size:12px;position:relative;top:1px">搜索解决方案资源管理器</span>(Ctrl+;)</div>
<div class="t" style="left:42.1px;top:175.2px;font-size:12.5px;line-height:18px;height:18px;color:#f1f1f1;width:220.9px;overflow:hidden;letter-spacing:0.08px;"><span style="font-size:12px;position:relative;top:1px">解决方案</span>“QOCCTModeling”(1 <span style="font-size:12px;position:relative;top:1px">个项目</span>/<span style="font-size:12px;position:relative;top:1px">共</span> 1 <span style="font-size:12px;position:relative;top:1px">个</span>)</div>
<div class="t" style="left:60.4px;top:193.5px;font-size:12.5px;line-height:18px;height:18px;color:#f1f1f1;letter-spacing:0.200px;font-weight:bold;">QOCCTModeling</div>
<div class="t" style="left:78.4px;top:213.9px;font-size:12px;line-height:17px;height:17px;color:#f1f1f1;letter-spacing:-0.358px;">引用</div>
<div class="t" style="left:78.4px;top:232.9px;font-size:12px;line-height:17px;height:17px;color:#f1f1f1;letter-spacing:-0.043px;">外部依赖项</div>
<div class="t" style="left:78.4px;top:250.5px;font-size:12.5px;line-height:18px;height:18px;color:#f1f1f1;letter-spacing:-0.083px;">Form Files</div>
<div class="t" style="left:96.4px;top:269.5px;font-size:12.5px;line-height:18px;height:18px;color:#f1f1f1;letter-spacing:0.204px;">cmainwindow.ui</div>
<div class="t" style="left:78.4px;top:288.5px;font-size:12.5px;line-height:18px;height:18px;color:#f1f1f1;letter-spacing:0.004px;">Generated Files</div>
<div class="t" style="left:78.4px;top:307.5px;font-size:12.5px;line-height:18px;height:18px;color:#f1f1f1;letter-spacing:0.002px;">Header Files</div>
<div class="t" style="left:96.4px;top:326.5px;font-size:12.5px;line-height:18px;height:18px;color:#f1f1f1;letter-spacing:0.187px;">cmainwindow.h</div>
<div class="t" style="left:96.4px;top:345.5px;font-size:12.5px;line-height:18px;height:18px;color:#f1f1f1;letter-spacing:0.429px;">IEportModel.h</div>
<div class="t" style="left:96.4px;top:364.5px;font-size:12.5px;line-height:18px;height:18px;color:#f1f1f1;letter-spacing:0.102px;">OCCTModeling.h</div>
<div class="t" style="left:96.4px;top:383.5px;font-size:12.5px;line-height:18px;height:18px;color:#f1f1f1;letter-spacing:-0.029px;">OCCTWidget.h</div>
<div class="t" style="left:78.4px;top:402.5px;font-size:12.5px;line-height:18px;height:18px;color:#f1f1f1;letter-spacing:-0.098px;">Resource Files</div>
<div class="t" style="left:96.4px;top:421.5px;font-size:12.5px;line-height:18px;height:18px;color:#f1f1f1;letter-spacing:0.169px;">mk_box.png</div>
<div class="t" style="left:96.4px;top:440.5px;font-size:12.5px;line-height:18px;height:18px;color:#f1f1f1;letter-spacing:0.094px;">mk_cone.png</div>
<div class="t" style="left:96.4px;top:459.5px;font-size:12.5px;line-height:18px;height:18px;color:#f1f1f1;letter-spacing:0.178px;">mk_cylinder.png</div>
<div class="t" style="left:96.4px;top:478.5px;font-size:12.5px;line-height:18px;height:18px;color:#f1f1f1;letter-spacing:0.133px;">mk_sphere.png</div>
<div class="t" style="left:96.4px;top:497.5px;font-size:12.5px;line-height:18px;height:18px;color:#f1f1f1;letter-spacing:0.164px;">mk_torus.png</div>
<div class="t" style="left:96.4px;top:516.5px;font-size:12.5px;line-height:18px;height:18px;color:#f1f1f1;letter-spacing:0.200px;">res.qrc</div>
<div class="t" style="left:78.4px;top:535.5px;font-size:12.5px;line-height:18px;height:18px;color:#f1f1f1;letter-spacing:-0.115px;">Source Files</div>
<div class="t" style="left:96.4px;top:554.5px;font-size:12.5px;line-height:18px;height:18px;color:#f1f1f1;letter-spacing:0.282px;">cmainwindow.cpp</div>
<div class="t" style="left:96.4px;top:573.5px;font-size:12.5px;line-height:18px;height:18px;color:#f1f1f1;letter-spacing:0.465px;">IEportModel.cpp</div>
<div class="t" style="left:96.4px;top:592.5px;font-size:12.5px;line-height:18px;height:18px;color:#f1f1f1;letter-spacing:0.196px;">main.cpp</div>
<div class="t" style="left:96.4px;top:611.5px;font-size:12.5px;line-height:18px;height:18px;color:#f1f1f1;letter-spacing:0.221px;">OCCTModeling.cpp</div>
<div class="t" style="left:96.4px;top:630.5px;font-size:12.5px;line-height:18px;height:18px;color:#f1f1f1;letter-spacing:0.096px;">OCCTWidget.cpp</div>
</div>

<div id="editor">
<div class="abs" style="left:569px;top:97px;width:150px;height:21px;background:#3f3f46;"></div>
<svg style="left:390px;top:101px" width="330" height="12" viewBox="390 101 330 12" fill="none"><path d="M393.4 102.6H397.4V106.8M393.4 102.6V106.8M392 107H399M395.4 107V111.4M396.6 102.6V106.8" stroke="#d0d0d0" stroke-width="1"/><path d="M691 104.6V108.6M691 104.8H687.2V108.4H691M686.8 103.4V109.8M683 106.6H686.8M690.2 108V104.8" stroke="#7a7a80" stroke-width="1"/><path d="M702.4 102.6L710.6 110.8M710.6 102.6L702.4 110.8" stroke="#7a7a80" stroke-width="1.5"/></svg>
<div class="abs" style="left:271px;top:117px;width:1000px;height:2px;background:#3f3f46;"></div>
<div class="abs" style="left:271px;top:119px;width:1px;height:636px;background:#3f3f46;"></div>
<div class="abs" style="left:273px;top:120px;width:998px;height:23px;border:1px solid #434346;border-right:none;background:#333337;box-sizing:border-box;"></div>
<svg style="left:446.5px;top:130px" width="8" height="6"><path d="M0 0.5H7L3.5 4Z" fill="#8a8a8e"/></svg>
<div class="abs" style="left:456px;top:121px;width:1px;height:21px;background:#434346;"></div>
<div class="abs" style="left:457px;top:121px;width:3px;height:21px;background:#2d2d30;"></div>
<div class="abs" style="left:460px;top:121px;width:15px;height:10px;border:1px solid #434346;box-sizing:border-box;background:#333337;"></div>
<div class="abs" style="left:460px;top:132px;width:15px;height:10px;border:1px solid #434346;box-sizing:border-box;background:#333337;"></div>
<svg style="left:464px;top:124px" width="7" height="5"><path d="M0 4H6L3 0.8Z" fill="#9a9a9e"/></svg>
<div class="abs" style="left:475px;top:120px;width:5px;height:23px;background:#2d2d30;"></div>
<div class="abs" style="left:480px;top:121px;width:1px;height:21px;background:#434346;"></div>
<div class="abs" style="left:272px;top:145px;width:999px;height:1px;background:#434346;"></div>
<div class="abs" style="left:272px;top:146px;width:999px;height:19px;background:#2d2d30;"></div>
<div class="abs" style="left:272px;top:165px;width:999px;height:1px;background:#3f3f46;"></div>
<svg style="left:276px;top:148px" width="15" height="15" viewBox="0 0 15 15" fill="none"><rect x="0.5" y="0.9" width="13" height="12.6" stroke="#c586c0"/><path d="M4.6 2.8V7M2.6 4.9H6.8M9.6 6.8V11.2M7.4 9H11.8" stroke="#f1f1f1" stroke-width="1.6"/><path d="M6 5.8L8.6 8" stroke="#f1f1f1" stroke-width="1"/></svg>
<div class="abs" style="left:272px;top:166px;width:999px;height:569px;background:#1e1e1e;"></div>
<div class="abs" style="left:272px;top:166px;width:25px;height:569px;background:#333333;"></div>
<div class="abs" style="left:373.5px;top:166px;width:8px;height:70.5px;background:#577430;"></div>
<div class="abs" style="left:384.5px;top:241px;width:8px;height:12px;border:1px solid #9a9a9a;box-sizing:border-box;"></div><div class="abs" style="left:386.5px;top:246.5px;width:4px;height:1px;background:#9a9a9a;"></div>
<div class="abs" style="left:1249px;top:282px;width:22px;height:2px;background:#464646;"></div><div class="abs" style="left:1249px;top:302px;width:22px;height:2px;background:#464646;"></div>
<div class="t" style="left:1243.4px;top:327.1px;font-family:'Liberation Serif',serif;font-size:19.4px;line-height:24px;height:24px;color:#ecca00"><span style="display:inline-block;width:9.15px;text-align:center">c</span><span style="display:inline-block;width:9.15px;text-align:center">a</span><span style="display:inline-block;width:9.15px;text-align:center">n</span></div>
<div class="t" style="left:1243.4px;top:533.5px;font-family:'Liberation Serif',serif;font-size:19.4px;line-height:24px;height:24px;color:#ecca00"><span style="display:inline-block;width:9.15px;text-align:center">a</span><span style="display:inline-block;width:9.15px;text-align:center">r</span><span style="display:inline-block;width:9.15px;text-align:center">d</span><span style="display:inline-block;width:9.15px;text-align:center">_</span></div>
<div class="t" style="left:1243.4px;top:671.7px;font-family:'Liberation Serif',serif;font-size:18.6px;line-height:24px;height:24px;color:#b5cea8"><span style="display:inline-block;width:9.15px;text-align:center">4</span><span style="display:inline-block;width:9.15px;text-align:center">0</span><span style="display:inline-block;width:9.15px;text-align:left">.</span></div>
<div class="ln" style="top:168.9px">44</div>
<div class="ln" style="top:191.9px">45</div>
<div class="ln" style="top:215.0px">46</div>
<div class="ln" style="top:238.0px">47</div>
<div class="ln" style="top:261.1px">48</div>
<div class="ln" style="top:284.1px">49</div>
<div class="ln" style="top:307.1px">50</div>
<div class="ln" style="top:330.2px">51</div>
<div class="ln" style="top:353.2px">52</div>
<div class="ln" style="top:376.3px">53</div>
<div class="ln" style="top:399.3px">54</div>
<div class="ln" style="top:422.3px">55</div>
<div class="ln" style="top:445.4px">56</div>
<div class="ln" style="top:468.4px">57</div>
<div class="ln" style="top:491.5px">58</div>
<div class="ln" style="top:514.5px">59</div>
<div class="ln" style="top:537.5px">60</div>
<div class="ln" style="top:560.6px">61</div>
<div class="ln" style="top:583.6px">62</div>
<div class="ln" style="top:606.7px">63</div>
<div class="ln" style="top:629.7px">64</div>
<div class="ln" style="top:652.7px">65</div>
<div class="ln" style="top:675.8px">66</div>
<div class="ln" style="top:698.8px">67</div>
<div class="ln" style="top:721.9px">68</div>
<div class="t" style="left:277.0px;top:97.6px;font-size:12.7px;line-height:18px;height:18px;color:#f1f1f1;letter-spacing:0.217px;">cmainwindow.cpp</div>
<div class="t" style="left:433.0px;top:97.6px;font-size:12.7px;line-height:18px;height:18px;color:#f1f1f1;letter-spacing:0.150px;">cmainwindow.h</div>
<div class="t" style="left:573.0px;top:97.6px;font-size:12.7px;line-height:18px;height:18px;color:#f1f1f1;letter-spacing:0.063px;">OCCTModeling.h</div>
<div class="t" style="left:724.3px;top:97.6px;font-size:12.7px;line-height:18px;height:18px;color:#f1f1f1;letter-spacing:-0.009px;">OCCTWidget.cpp</div>
<div class="t" style="left:877.0px;top:97.6px;font-size:12.7px;line-height:18px;height:18px;color:#f1f1f1;letter-spacing:0.161px;">OCCTModeling.cpp</div>
<div class="t" style="left:1044.0px;top:97.6px;font-size:12.7px;line-height:18px;height:18px;color:#f1f1f1;letter-spacing:0.189px;">main.cpp</div>
<div class="t" style="left:1150.0px;top:97.6px;font-size:12.7px;line-height:18px;height:18px;color:#f1f1f1;letter-spacing:0.427px;">IEportModel.cpp</div>
<div class="t" style="left:293.5px;top:146.2px;font-size:13px;line-height:18px;height:18px;color:#f1f1f1;letter-spacing:-0.15px;">QOCCTModeling</div>
</div>

<div id="bottom">
<div class="abs" style="left:272px;top:735px;width:999px;height:19px;background:#3e3e42;"></div>
<div class="abs" style="left:272px;top:735px;width:59px;height:18px;background:#333337;border:1px solid #434346;box-sizing:border-box;"></div>
<svg style="left:322px;top:742px" width="8" height="5"><path d="M0 0H7L3.5 4Z" fill="#f1f1f1"/></svg>
<svg style="left:355px;top:737px" width="14" height="14" viewBox="0 0 14 14" fill="none"><circle cx="6.8" cy="6.8" r="5.8" fill="#2d2d30" stroke="#d8d8d8" stroke-width="1.1"/><circle cx="6.8" cy="6.8" r="4.7" fill="#3fae4a"/><path d="M4 7L6 9.2L9.8 4.6" stroke="#fff" stroke-width="1.5"/></svg>
<div class="abs" style="left:1249px;top:735px;width:22px;height:19px;background:#3e3e42;"></div><div class="abs" style="left:1249px;top:739px;width:22px;height:10px;background:#686868;"></div>
<div class="abs" style="left:272px;top:761px;width:999px;height:22.5px;background:#007acc;"></div>
<svg style="left:308px;top:770px" width="960" height="6" fill="#59a8de"><rect x="0" y="0" width="1" height="1"/><rect x="4" y="0" width="1" height="1"/><rect x="8" y="0" width="1" height="1"/><rect x="12" y="0" width="1" height="1"/><rect x="16" y="0" width="1" height="1"/><rect x="20" y="0" width="1" height="1"/><rect x="24" y="0" width="1" height="1"/><rect x="28" y="0" width="1" height="1"/><rect x="32" y="0" width="1" height="1"/><rect x="36" y="0" width="1" height="1"/><rect x="40" y="0" width="1" height="1"/><rect x="44" y="0" width="1" height="1"/><rect x="48" y="0" width="1" height="1"/><rect x="52" y="0" width="1" height="1"/><rect x="56" y="0" width="1" height="1"/><rect x="60" y="0" width="1" height="1"/><rect x="64" y="0" width="1" height="1"/><rect x="68" y="0" width="1" height="1"/><rect x="72" y="0" width="1" height="1"/><rect x="76" y="0" width="1" height="1"/><rect x="80" y="0" width="1" height="1"/><rect x="84" y="0" width="1" height="1"/><rect x="88" y="0" width="1" height="1"/><rect x="92" y="0" width="1" height="1"/><rect x="96" y="0" width="1" height="1"/><rect x="100" y="0" width="1" height="1"/><rect x="104" y="0" width="1" height="1"/><rect x="108" y="0" width="1" height="1"/><rect x="112" y="0" width="1" height="1"/><rect x="116" y="0" width="1" height="1"/><rect x="120" y="0" width="1" height="1"/><rect x="124" y="0" width="1" height="1"/><rect x="128" y="0" width="1" height="1"/><rect x="132" y="0" width="1" height="1"/><rect x="136" y="0" width="1" height="1"/><rect x="140" y="0" width="1" height="1"/><rect x="144" y="0" width="1" height="1"/><rect x="148" y="0" width="1" height="1"/><rect x="152" y="0" width="1" height="1"/><rect x="156" y="0" width="1" height="1"/><rect x="160" y="0" width="1" height="1"/><rect x="164" y="0" width="1" height="1"/><rect x="168" y="0" width="1" height="1"/><rect x="172" y="0" width="1" height="1"/><rect x="176" y="0" width="1" height="1"/><rect x="180" y="0" width="1" height="1"/><rect x="184" y="0" width="1" height="1"/><rect x="188" y="0" width="1" height="1"/><rect x="192" y="0" width="1" height="1"/><rect x="196" y="0" width="1" height="1"/><rect x="200" y="0" width="1" height="1"/><rect x="204" y="0" width="1" height="1"/><rect x="208" y="0" width="1" height="1"/><rect x="212" y="0" width="1" height="1"/><rect x="216" y="0" width="1" height="1"/><rect x="220" y="0" width="1" height="1"/><rect x="224" y="0" width="1" height="1"/><rect x="228" y="0" width="1" height="1"/><rect x="232" y="0" width="1" height="1"/><rect x="236" y="0" width="1" height="1"/><rect x="240" y="0" width="1" height="1"/><rect x="244" y="0" width="1" height="1"/><rect x="248" y="0" width="1" height="1"/><rect x="252" y="0" width="1" height="1"/><rect x="256" y="0" width="1" height="1"/><rect x="260" y="0" width="1" height="1"/><rect x="264" y="0" width="1" height="1"/><rect x="268" y="0" width="1" height="1"/><rect x="272" y="0" width="1" height="1"/><rect x="276" y="0" width="1" height="1"/><rect x="280" y="0" width="1" height="1"/><rect x="284" y="0" width="1" height="1"/><rect x="288" y="0" width="1" height="1"/><rect x="292" y="0" width="1" height="1"/><rect x="296" y="0" width="1" height="1"/><rect x="300" y="0" width="1" height="1"/><rect x="304" y="0" width="1" height="1"/><rect x="308" y="0" width="1" height="1"/><rect x="312" y="0" width="1" height="1"/><rect x="316" y="0" width="1" height="1"/><rect x="320" y="0" width="1" height="1"/><rect x="324" y="0" width="1" height="1"/><rect x="328" y="0" width="1" height="1"/><rect x="332" y="0" width="1" height="1"/><rect x="336" y="0" width="1" height="1"/><rect x="340" y="0" width="1" height="1"/><rect x="344" y="0" width="1" height="1"/><rect x="348" y="0" width="1" height="1"/><rect x="352" y="0" width="1" height="1"/><rect x="356" y="0" width="1" height="1"/><rect x="360" y="0" width="1" height="1"/><rect x="364" y="0" width="1" height="1"/><rect x="368" y="0" width="1" height="1"/><rect x="372" y="0" width="1" height="1"/><rect x="376" y="0" width="1" height="1"/><rect x="380" y="0" width="1" height="1"/><rect x="384" y="0" width="1" height="1"/><rect x="388" y="0" width="1" height="1"/><rect x="392" y="0" width="1" height="1"/><rect x="396" y="0" width="1" height="1"/><rect x="400" y="0" width="1" height="1"/><rect x="404" y="0" width="1" height="1"/><rect x="408" y="0" width="1" height="1"/><rect x="412" y="0" width="1" height="1"/><rect x="416" y="0" width="1" height="1"/><rect x="420" y="0" width="1" height="1"/><rect x="424" y="0" width="1" height="1"/><rect x="428" y="0" width="1" height="1"/><rect x="432" y="0" width="1" height="1"/><rect x="436" y="0" width="1" height="1"/><rect x="440" y="0" width="1" height="1"/><rect x="444" y="0" width="1" height="1"/><rect x="448" y="0" width="1" height="1"/><rect x="452" y="0" width="1" height="1"/><rect x="456" y="0" width="1" height="1"/><rect x="460" y="0" width="1" height="1"/><rect x="464" y="0" width="1" height="1"/><rect x="468" y="0" width="1" height="1"/><rect x="472" y="0" width="1" height="1"/><rect x="476" y="0" width="1" height="1"/><rect x="480" y="0" width="1" height="1"/><rect x="484" y="0" width="1" height="1"/><rect x="488" y="0" width="1" height="1"/><rect x="492" y="0" width="1" height="1"/><rect x="496" y="0" width="1" height="1"/><rect x="500" y="0" width="1" height="1"/><rect x="504" y="0" width="1" height="1"/><rect x="508" y="0" width="1" height="1"/><rect x="512" y="0" width="1" height="1"/><rect x="516" y="0" width="1" height="1"/><rect x="520" y="0" width="1" height="1"/><rect x="524" y="0" width="1" height="1"/><rect x="528" y="0" width="1" height="1"/><rect x="532" y="0" width="1" height="1"/><rect x="536" y="0" width="1" height="1"/><rect x="540" y="0" width="1" height="1"/><rect x="544" y="0" width="1" height="1"/><rect x="548" y="0" width="1" height="1"/><rect x="552" y="0" width="1" height="1"/><rect x="556" y="0" width="1" height="1"/><rect x="560" y="0" width="1" height="1"/><rect x="564" y="0" width="1" height="1"/><rect x="568" y="0" width="1" height="1"/><rect x="572" y="0" width="1" height="1"/><rect x="576" y="0" width="1" height="1"/><rect x="580" y="0" width="1" height="1"/><rect x="584" y="0" width="1" height="1"/><rect x="588" y="0" width="1" height="1"/><rect x="592" y="0" width="1" height="1"/><rect x="596" y="0" width="1" height="1"/><rect x="600" y="0" width="1" height="1"/><rect x="604" y="0" width="1" height="1"/><rect x="608" y="0" width="1" height="1"/><rect x="612" y="0" width="1" height="1"/><rect x="616" y="0" width="1" height="1"/><rect x="620" y="0" width="1" height="1"/><rect x="624" y="0" width="1" height="1"/><rect x="628" y="0" width="1" height="1"/><rect x="632" y="0" width="1" height="1"/><rect x="636" y="0" width="1" height="1"/><rect x="640" y="0" width="1" height="1"/><rect x="644" y="0" width="1" height="1"/><rect x="648" y="0" width="1" height="1"/><rect x="652" y="0" width="1" height="1"/><rect x="656" y="0" width="1" height="1"/><rect x="660" y="0" width="1" height="1"/><rect x="664" y="0" width="1" height="1"/><rect x="668" y="0" width="1" height="1"/><rect x="672" y="0" width="1" height="1"/><rect x="676" y="0" width="1" height="1"/><rect x="680" y="0" width="1" height="1"/><rect x="684" y="0" width="1" height="1"/><rect x="688" y="0" width="1" height="1"/><rect x="692" y="0" width="1" height="1"/><rect x="696" y="0" width="1" height="1"/><rect x="700" y="0" width="1" height="1"/><rect x="704" y="0" width="1" height="1"/><rect x="708" y="0" width="1" height="1"/><rect x="712" y="0" width="1" height="1"/><rect x="716" y="0" width="1" height="1"/><rect x="720" y="0" width="1" height="1"/><rect x="724" y="0" width="1" height="1"/><rect x="728" y="0" width="1" height="1"/><rect x="732" y="0" width="1" height="1"/><rect x="736" y="0" width="1" height="1"/><rect x="740" y="0" width="1" height="1"/><rect x="744" y="0" width="1" height="1"/><rect x="748" y="0" width="1" height="1"/><rect x="752" y="0" width="1" height="1"/><rect x="756" y="0" width="1" height="1"/><rect x="760" y="0" width="1" height="1"/><rect x="764" y="0" width="1" height="1"/><rect x="768" y="0" width="1" height="1"/><rect x="772" y="0" width="1" height="1"/><rect x="776" y="0" width="1" height="1"/><rect x="780" y="0" width="1" height="1"/><rect x="784" y="0" width="1" height="1"/><rect x="788" y="0" width="1" height="1"/><rect x="792" y="0" width="1" height="1"/><rect x="796" y="0" width="1" height="1"/><rect x="800" y="0" width="1" height="1"/><rect x="804" y="0" width="1" height="1"/><rect x="808" y="0" width="1" height="1"/><rect x="812" y="0" width="1" height="1"/><rect x="816" y="0" width="1" height="1"/><rect x="820" y="0" width="1" height="1"/><rect x="824" y="0" width="1" height="1"/><rect x="828" y="0" width="1" height="1"/><rect x="832" y="0" width="1" height="1"/><rect x="836" y="0" width="1" height="1"/><rect x="840" y="0" width="1" height="1"/><rect x="844" y="0" width="1" height="1"/><rect x="848" y="0" width="1" height="1"/><rect x="852" y="0" width="1" height="1"/><rect x="856" y="0" width="1" height="1"/><rect x="860" y="0" width="1" height="1"/><rect x="864" y="0" width="1" height="1"/><rect x="868" y="0" width="1" height="1"/><rect x="872" y="0" width="1" height="1"/><rect x="876" y="0" width="1" height="1"/><rect x="880" y="0" width="1" height="1"/><rect x="884" y="0" width="1" height="1"/><rect x="888" y="0" width="1" height="1"/><rect x="892" y="0" width="1" height="1"/><rect x="896" y="0" width="1" height="1"/><rect x="900" y="0" width="1" height="1"/><rect x="904" y="0" width="1" height="1"/><rect x="908" y="0" width="1" height="1"/><rect x="912" y="0" width="1" height="1"/><rect x="916" y="0" width="1" height="1"/><rect x="920" y="0" width="1" height="1"/><rect x="924" y="0" width="1" height="1"/><rect x="928" y="0" width="1" height="1"/><rect x="932" y="0" width="1" height="1"/><rect x="936" y="0" width="1" height="1"/><rect x="940" y="0" width="1" height="1"/><rect x="944" y="0" width="1" height="1"/><rect x="948" y="0" width="1" height="1"/><rect x="952" y="0" width="1" height="1"/><rect x="956" y="0" width="1" height="1"/><rect x="0" y="4" width="1" height="1"/><rect x="4" y="4" width="1" height="1"/><rect x="8" y="4" width="1" height="1"/><rect x="12" y="4" width="1" height="1"/><rect x="16" y="4" width="1" height="1"/><rect x="20" y="4" width="1" height="1"/><rect x="24" y="4" width="1" height="1"/><rect x="28" y="4" width="1" height="1"/><rect x="32" y="4" width="1" height="1"/><rect x="36" y="4" width="1" height="1"/><rect x="40" y="4" width="1" height="1"/><rect x="44" y="4" width="1" height="1"/><rect x="48" y="4" width="1" height="1"/><rect x="52" y="4" width="1" height="1"/><rect x="56" y="4" width="1" height="1"/><rect x="60" y="4" width="1" height="1"/><rect x="64" y="4" width="1" height="1"/><rect x="68" y="4" width="1" height="1"/><rect x="72" y="4" width="1" height="1"/><rect x="76" y="4" width="1" height="1"/><rect x="80" y="4" width="1" height="1"/><rect x="84" y="4" width="1" height="1"/><rect x="88" y="4" width="1" height="1"/><rect x="92" y="4" width="1" height="1"/><rect x="96" y="4" width="1" height="1"/><rect x="100" y="4" width="1" height="1"/><rect x="104" y="4" width="1" height="1"/><rect x="108" y="4" width="1" height="1"/><rect x="112" y="4" width="1" height="1"/><rect x="116" y="4" width="1" height="1"/><rect x="120" y="4" width="1" height="1"/><rect x="124" y="4" width="1" height="1"/><rect x="128" y="4" width="1" height="1"/><rect x="132" y="4" width="1" height="1"/><rect x="136" y="4" width="1" height="1"/><rect x="140" y="4" width="1" height="1"/><rect x="144" y="4" width="1" height="1"/><rect x="148" y="4" width="1" height="1"/><rect x="152" y="4" width="1" height="1"/><rect x="156" y="4" width="1" height="1"/><rect x="160" y="4" width="1" height="1"/><rect x="164" y="4" width="1" height="1"/><rect x="168" y="4" width="1" height="1"/><rect x="172" y="4" width="1" height="1"/><rect x="176" y="4" width="1" height="1"/><rect x="180" y="4" width="1" height="1"/><rect x="184" y="4" width="1" height="1"/><rect x="188" y="4" width="1" height="1"/><rect x="192" y="4" width="1" height="1"/><rect x="196" y="4" width="1" height="1"/><rect x="200" y="4" width="1" height="1"/><rect x="204" y="4" width="1" height="1"/><rect x="208" y="4" width="1" height="1"/><rect x="212" y="4" width="1" height="1"/><rect x="216" y="4" width="1" height="1"/><rect x="220" y="4" width="1" height="1"/><rect x="224" y="4" width="1" height="1"/><rect x="228" y="4" width="1" height="1"/><rect x="232" y="4" width="1" height="1"/><rect x="236" y="4" width="1" height="1"/><rect x="240" y="4" width="1" height="1"/><rect x="244" y="4" width="1" height="1"/><rect x="248" y="4" width="1" height="1"/><rect x="252" y="4" width="1" height="1"/><rect x="256" y="4" width="1" height="1"/><rect x="260" y="4" width="1" height="1"/><rect x="264" y="4" width="1" height="1"/><rect x="268" y="4" width="1" height="1"/><rect x="272" y="4" width="1" height="1"/><rect x="276" y="4" width="1" height="1"/><rect x="280" y="4" width="1" height="1"/><rect x="284" y="4" width="1" height="1"/><rect x="288" y="4" width="1" height="1"/><rect x="292" y="4" width="1" height="1"/><rect x="296" y="4" width="1" height="1"/><rect x="300" y="4" width="1" height="1"/><rect x="304" y="4" width="1" height="1"/><rect x="308" y="4" width="1" height="1"/><rect x="312" y="4" width="1" height="1"/><rect x="316" y="4" width="1" height="1"/><rect x="320" y="4" width="1" height="1"/><rect x="324" y="4" width="1" height="1"/><rect x="328" y="4" width="1" height="1"/><rect x="332" y="4" width="1" height="1"/><rect x="336" y="4" width="1" height="1"/><rect x="340" y="4" width="1" height="1"/><rect x="344" y="4" width="1" height="1"/><rect x="348" y="4" width="1" height="1"/><rect x="352" y="4" width="1" height="1"/><rect x="356" y="4" width="1" height="1"/><rect x="360" y="4" width="1" height="1"/><rect x="364" y="4" width="1" height="1"/><rect x="368" y="4" width="1" height="1"/><rect x="372" y="4" width="1" height="1"/><rect x="376" y="4" width="1" height="1"/><rect x="380" y="4" width="1" height="1"/><rect x="384" y="4" width="1" height="1"/><rect x="388" y="4" width="1" height="1"/><rect x="392" y="4" width="1" height="1"/><rect x="396" y="4" width="1" height="1"/><rect x="400" y="4" width="1" height="1"/><rect x="404" y="4" width="1" height="1"/><rect x="408" y="4" width="1" height="1"/><rect x="412" y="4" width="1" height="1"/><rect x="416" y="4" width="1" height="1"/><rect x="420" y="4" width="1" height="1"/><rect x="424" y="4" width="1" height="1"/><rect x="428" y="4" width="1" height="1"/><rect x="432" y="4" width="1" height="1"/><rect x="436" y="4" width="1" height="1"/><rect x="440" y="4" width="1" height="1"/><rect x="444" y="4" width="1" height="1"/><rect x="448" y="4" width="1" height="1"/><rect x="452" y="4" width="1" height="1"/><rect x="456" y="4" width="1" height="1"/><rect x="460" y="4" width="1" height="1"/><rect x="464" y="4" width="1" height="1"/><rect x="468" y="4" width="1" height="1"/><rect x="472" y="4" width="1" height="1"/><rect x="476" y="4" width="1" height="1"/><rect x="480" y="4" width="1" height="1"/><rect x="484" y="4" width="1" height="1"/><rect x="488" y="4" width="1" height="1"/><rect x="492" y="4" width="1" height="1"/><rect x="496" y="4" width="1" height="1"/><rect x="500" y="4" width="1" height="1"/><rect x="504" y="4" width="1" height="1"/><rect x="508" y="4" width="1" height="1"/><rect x="512" y="4" width="1" height="1"/><rect x="516" y="4" width="1" height="1"/><rect x="520" y="4" width="1" height="1"/><rect x="524" y="4" width="1" height="1"/><rect x="528" y="4" width="1" height="1"/><rect x="532" y="4" width="1" height="1"/><rect x="536" y="4" width="1" height="1"/><rect x="540" y="4" width="1" height="1"/><rect x="544" y="4" width="1" height="1"/><rect x="548" y="4" width="1" height="1"/><rect x="552" y="4" width="1" height="1"/><rect x="556" y="4" width="1" height="1"/><rect x="560" y="4" width="1" height="1"/><rect x="564" y="4" width="1" height="1"/><rect x="568" y="4" width="1" height="1"/><rect x="572" y="4" width="1" height="1"/><rect x="576" y="4" width="1" height="1"/><rect x="580" y="4" width="1" height="1"/><rect x="584" y="4" width="1" height="1"/><rect x="588" y="4" width="1" height="1"/><rect x="592" y="4" width="1" height="1"/><rect x="596" y="4" width="1" height="1"/><rect x="600" y="4" width="1" height="1"/><rect x="604" y="4" width="1" height="1"/><rect x="608" y="4" width="1" height="1"/><rect x="612" y="4" width="1" height="1"/><rect x="616" y="4" width="1" height="1"/><rect x="620" y="4" width="1" height="1"/><rect x="624" y="4" width="1" height="1"/><rect x="628" y="4" width="1" height="1"/><rect x="632" y="4" width="1" height="1"/><rect x="636" y="4" width="1" height="1"/><rect x="640" y="4" width="1" height="1"/><rect x="644" y="4" width="1" height="1"/><rect x="648" y="4" width="1" height="1"/><rect x="652" y="4" width="1" height="1"/><rect x="656" y="4" width="1" height="1"/><rect x="660" y="4" width="1" height="1"/><rect x="664" y="4" width="1" height="1"/><rect x="668" y="4" width="1" height="1"/><rect x="672" y="4" width="1" height="1"/><rect x="676" y="4" width="1" height="1"/><rect x="680" y="4" width="1" height="1"/><rect x="684" y="4" width="1" height="1"/><rect x="688" y="4" width="1" height="1"/><rect x="692" y="4" width="1" height="1"/><rect x="696" y="4" width="1" height="1"/><rect x="700" y="4" width="1" height="1"/><rect x="704" y="4" width="1" height="1"/><rect x="708" y="4" width="1" height="1"/><rect x="712" y="4" width="1" height="1"/><rect x="716" y="4" width="1" height="1"/><rect x="720" y="4" width="1" height="1"/><rect x="724" y="4" width="1" height="1"/><rect x="728" y="4" width="1" height="1"/><rect x="732" y="4" width="1" height="1"/><rect x="736" y="4" width="1" height="1"/><rect x="740" y="4" width="1" height="1"/><rect x="744" y="4" width="1" height="1"/><rect x="748" y="4" width="1" height="1"/><rect x="752" y="4" width="1" height="1"/><rect x="756" y="4" width="1" height="1"/><rect x="760" y="4" width="1" height="1"/><rect x="764" y="4" width="1" height="1"/><rect x="768" y="4" width="1" height="1"/><rect x="772" y="4" width="1" height="1"/><rect x="776" y="4" width="1" height="1"/><rect x="780" y="4" width="1" height="1"/><rect x="784" y="4" width="1" height="1"/><rect x="788" y="4" width="1" height="1"/><rect x="792" y="4" width="1" height="1"/><rect x="796" y="4" width="1" height="1"/><rect x="800" y="4" width="1" height="1"/><rect x="804" y="4" width="1" height="1"/><rect x="808" y="4" width="1" height="1"/><rect x="812" y="4" width="1" height="1"/><rect x="816" y="4" width="1" height="1"/><rect x="820" y="4" width="1" height="1"/><rect x="824" y="4" width="1" height="1"/><rect x="828" y="4" width="1" height="1"/><rect x="832" y="4" width="1" height="1"/><rect x="836" y="4" width="1" height="1"/><rect x="840" y="4" width="1" height="1"/><rect x="844" y="4" width="1" height="1"/><rect x="848" y="4" width="1" height="1"/><rect x="852" y="4" width="1" height="1"/><rect x="856" y="4" width="1" height="1"/><rect x="860" y="4" width="1" height="1"/><rect x="864" y="4" width="1" height="1"/><rect x="868" y="4" width="1" height="1"/><rect x="872" y="4" width="1" height="1"/><rect x="876" y="4" width="1" height="1"/><rect x="880" y="4" width="1" height="1"/><rect x="884" y="4" width="1" height="1"/><rect x="888" y="4" width="1" height="1"/><rect x="892" y="4" width="1" height="1"/><rect x="896" y="4" width="1" height="1"/><rect x="900" y="4" width="1" height="1"/><rect x="904" y="4" width="1" height="1"/><rect x="908" y="4" width="1" height="1"/><rect x="912" y="4" width="1" height="1"/><rect x="916" y="4" width="1" height="1"/><rect x="920" y="4" width="1" height="1"/><rect x="924" y="4" width="1" height="1"/><rect x="928" y="4" width="1" height="1"/><rect x="932" y="4" width="1" height="1"/><rect x="936" y="4" width="1" height="1"/><rect x="940" y="4" width="1" height="1"/><rect x="944" y="4" width="1" height="1"/><rect x="948" y="4" width="1" height="1"/><rect x="952" y="4" width="1" height="1"/><rect x="956" y="4" width="1" height="1"/><rect x="2" y="2" width="1" height="1"/><rect x="6" y="2" width="1" height="1"/><rect x="10" y="2" width="1" height="1"/><rect x="14" y="2" width="1" height="1"/><rect x="18" y="2" width="1" height="1"/><rect x="22" y="2" width="1" height="1"/><rect x="26" y="2" width="1" height="1"/><rect x="30" y="2" width="1" height="1"/><rect x="34" y="2" width="1" height="1"/><rect x="38" y="2" width="1" height="1"/><rect x="42" y="2" width="1" height="1"/><rect x="46" y="2" width="1" height="1"/><rect x="50" y="2" width="1" height="1"/><rect x="54" y="2" width="1" height="1"/><rect x="58" y="2" width="1" height="1"/><rect x="62" y="2" width="1" height="1"/><rect x="66" y="2" width="1" height="1"/><rect x="70" y="2" width="1" height="1"/><rect x="74" y="2" width="1" height="1"/><rect x="78" y="2" width="1" height="1"/><rect x="82" y="2" width="1" height="1"/><rect x="86" y="2" width="1" height="1"/><rect x="90" y="2" width="1" height="1"/><rect x="94" y="2" width="1" height="1"/><rect x="98" y="2" width="1" height="1"/><rect x="102" y="2" width="1" height="1"/><rect x="106" y="2" width="1" height="1"/><rect x="110" y="2" width="1" height="1"/><rect x="114" y="2" width="1" height="1"/><rect x="118" y="2" width="1" height="1"/><rect x="122" y="2" width="1" height="1"/><rect x="126" y="2" width="1" height="1"/><rect x="130" y="2" width="1" height="1"/><rect x="134" y="2" width="1" height="1"/><rect x="138" y="2" width="1" height="1"/><rect x="142" y="2" width="1" height="1"/><rect x="146" y="2" width="1" height="1"/><rect x="150" y="2" width="1" height="1"/><rect x="154" y="2" width="1" height="1"/><rect x="158" y="2" width="1" height="1"/><rect x="162" y="2" width="1" height="1"/><rect x="166" y="2" width="1" height="1"/><rect x="170" y="2" width="1" height="1"/><rect x="174" y="2" width="1" height="1"/><rect x="178" y="2" width="1" height="1"/><rect x="182" y="2" width="1" height="1"/><rect x="186" y="2" width="1" height="1"/><rect x="190" y="2" width="1" height="1"/><rect x="194" y="2" width="1" height="1"/><rect x="198" y="2" width="1" height="1"/><rect x="202" y="2" width="1" height="1"/><rect x="206" y="2" width="1" height="1"/><rect x="210" y="2" width="1" height="1"/><rect x="214" y="2" width="1" height="1"/><rect x="218" y="2" width="1" height="1"/><rect x="222" y="2" width="1" height="1"/><rect x="226" y="2" width="1" height="1"/><rect x="230" y="2" width="1" height="1"/><rect x="234" y="2" width="1" height="1"/><rect x="238" y="2" width="1" height="1"/><rect x="242" y="2" width="1" height="1"/><rect x="246" y="2" width="1" height="1"/><rect x="250" y="2" width="1" height="1"/><rect x="254" y="2" width="1" height="1"/><rect x="258" y="2" width="1" height="1"/><rect x="262" y="2" width="1" height="1"/><rect x="266" y="2" width="1" height="1"/><rect x="270" y="2" width="1" height="1"/><rect x="274" y="2" width="1" height="1"/><rect x="278" y="2" width="1" height="1"/><rect x="282" y="2" width="1" height="1"/><rect x="286" y="2" width="1" height="1"/><rect x="290" y="2" width="1" height="1"/><rect x="294" y="2" width="1" height="1"/><rect x="298" y="2" width="1" height="1"/><rect x="302" y="2" width="1" height="1"/><rect x="306" y="2" width="1" height="1"/><rect x="310" y="2" width="1" height="1"/><rect x="314" y="2" width="1" height="1"/><rect x="318" y="2" width="1" height="1"/><rect x="322" y="2" width="1" height="1"/><rect x="326" y="2" width="1" height="1"/><rect x="330" y="2" width="1" height="1"/><rect x="334" y="2" width="1" height="1"/><rect x="338" y="2" width="1" height="1"/><rect x="342" y="2" width="1" height="1"/><rect x="346" y="2" width="1" height="1"/><rect x="350" y="2" width="1" height="1"/><rect x="354" y="2" width="1" height="1"/><rect x="358" y="2" width="1" height="1"/><rect x="362" y="2" width="1" height="1"/><rect x="366" y="2" width="1" height="1"/><rect x="370" y="2" width="1" height="1"/><rect x="374" y="2" width="1" height="1"/><rect x="378" y="2" width="1" height="1"/><rect x="382" y="2" width="1" height="1"/><rect x="386" y="2" width="1" height="1"/><rect x="390" y="2" width="1" height="1"/><rect x="394" y="2" width="1" height="1"/><rect x="398" y="2" width="1" height="1"/><rect x="402" y="2" width="1" height="1"/><rect x="406" y="2" width="1" height="1"/><rect x="410" y="2" width="1" height="1"/><rect x="414" y="2" width="1" height="1"/><rect x="418" y="2" width="1" height="1"/><rect x="422" y="2" width="1" height="1"/><rect x="426" y="2" width="1" height="1"/><rect x="430" y="2" width="1" height="1"/><rect x="434" y="2" width="1" height="1"/><rect x="438" y="2" width="1" height="1"/><rect x="442" y="2" width="1" height="1"/><rect x="446" y="2" width="1" height="1"/><rect x="450" y="2" width="1" height="1"/><rect x="454" y="2" width="1" height="1"/><rect x="458" y="2" width="1" height="1"/><rect x="462" y="2" width="1" height="1"/><rect x="466" y="2" width="1" height="1"/><rect x="470" y="2" width="1" height="1"/><rect x="474" y="2" width="1" height="1"/><rect x="478" y="2" width="1" height="1"/><rect x="482" y="2" width="1" height="1"/><rect x="486" y="2" width="1" height="1"/><rect x="490" y="2" width="1" height="1"/><rect x="494" y="2" width="1" height="1"/><rect x="498" y="2" width="1" height="1"/><rect x="502" y="2" width="1" height="1"/><rect x="506" y="2" width="1" height="1"/><rect x="510" y="2" width="1" height="1"/><rect x="514" y="2" width="1" height="1"/><rect x="518" y="2" width="1" height="1"/><rect x="522" y="2" width="1" height="1"/><rect x="526" y="2" width="1" height="1"/><rect x="530" y="2" width="1" height="1"/><rect x="534" y="2" width="1" height="1"/><rect x="538" y="2" width="1" height="1"/><rect x="542" y="2" width="1" height="1"/><rect x="546" y="2" width="1" height="1"/><rect x="550" y="2" width="1" height="1"/><rect x="554" y="2" width="1" height="1"/><rect x="558" y="2" width="1" height="1"/><rect x="562" y="2" width="1" height="1"/><rect x="566" y="2" width="1" height="1"/><rect x="570" y="2" width="1" height="1"/><rect x="574" y="2" width="1" height="1"/><rect x="578" y="2" width="1" height="1"/><rect x="582" y="2" width="1" height="1"/><rect x="586" y="2" width="1" height="1"/><rect x="590" y="2" width="1" height="1"/><rect x="594" y="2" width="1" height="1"/><rect x="598" y="2" width="1" height="1"/><rect x="602" y="2" width="1" height="1"/><rect x="606" y="2" width="1" height="1"/><rect x="610" y="2" width="1" height="1"/><rect x="614" y="2" width="1" height="1"/><rect x="618" y="2" width="1" height="1"/><rect x="622" y="2" width="1" height="1"/><rect x="626" y="2" width="1" height="1"/><rect x="630" y="2" width="1" height="1"/><rect x="634" y="2" width="1" height="1"/><rect x="638" y="2" width="1" height="1"/><rect x="642" y="2" width="1" height="1"/><rect x="646" y="2" width="1" height="1"/><rect x="650" y="2" width="1" height="1"/><rect x="654" y="2" width="1" height="1"/><rect x="658" y="2" width="1" height="1"/><rect x="662" y="2" width="1" height="1"/><rect x="666" y="2" width="1" height="1"/><rect x="670" y="2" width="1" height="1"/><rect x="674" y="2" width="1" height="1"/><rect x="678" y="2" width="1" height="1"/><rect x="682" y="2" width="1" height="1"/><rect x="686" y="2" width="1" height="1"/><rect x="690" y="2" width="1" height="1"/><rect x="694" y="2" width="1" height="1"/><rect x="698" y="2" width="1" height="1"/><rect x="702" y="2" width="1" height="1"/><rect x="706" y="2" width="1" height="1"/><rect x="710" y="2" width="1" height="1"/><rect x="714" y="2" width="1" height="1"/><rect x="718" y="2" width="1" height="1"/><rect x="722" y="2" width="1" height="1"/><rect x="726" y="2" width="1" height="1"/><rect x="730" y="2" width="1" height="1"/><rect x="734" y="2" width="1" height="1"/><rect x="738" y="2" width="1" height="1"/><rect x="742" y="2" width="1" height="1"/><rect x="746" y="2" width="1" height="1"/><rect x="750" y="2" width="1" height="1"/><rect x="754" y="2" width="1" height="1"/><rect x="758" y="2" width="1" height="1"/><rect x="762" y="2" width="1" height="1"/><rect x="766" y="2" width="1" height="1"/><rect x="770" y="2" width="1" height="1"/><rect x="774" y="2" width="1" height="1"/><rect x="778" y="2" width="1" height="1"/><rect x="782" y="2" width="1" height="1"/><rect x="786" y="2" width="1" height="1"/><rect x="790" y="2" width="1" height="1"/><rect x="794" y="2" width="1" height="1"/><rect x="798" y="2" width="1" height="1"/><rect x="802" y="2" width="1" height="1"/><rect x="806" y="2" width="1" height="1"/><rect x="810" y="2" width="1" height="1"/><rect x="814" y="2" width="1" height="1"/><rect x="818" y="2" width="1" height="1"/><rect x="822" y="2" width="1" height="1"/><rect x="826" y="2" width="1" height="1"/><rect x="830" y="2" width="1" height="1"/><rect x="834" y="2" width="1" height="1"/><rect x="838" y="2" width="1" height="1"/><rect x="842" y="2" width="1" height="1"/><rect x="846" y="2" width="1" height="1"/><rect x="850" y="2" width="1" height="1"/><rect x="854" y="2" width="1" height="1"/><rect x="858" y="2" width="1" height="1"/><rect x="862" y="2" width="1" height="1"/><rect x="866" y="2" width="1" height="1"/><rect x="870" y="2" width="1" height="1"/><rect x="874" y="2" width="1" height="1"/><rect x="878" y="2" width="1" height="1"/><rect x="882" y="2" width="1" height="1"/><rect x="886" y="2" width="1" height="1"/><rect x="890" y="2" width="1" height="1"/><rect x="894" y="2" width="1" height="1"/><rect x="898" y="2" width="1" height="1"/><rect x="902" y="2" width="1" height="1"/><rect x="906" y="2" width="1" height="1"/><rect x="910" y="2" width="1" height="1"/><rect x="914" y="2" width="1" height="1"/><rect x="918" y="2" width="1" height="1"/><rect x="922" y="2" width="1" height="1"/><rect x="926" y="2" width="1" height="1"/><rect x="930" y="2" width="1" height="1"/><rect x="934" y="2" width="1" height="1"/><rect x="938" y="2" width="1" height="1"/><rect x="942" y="2" width="1" height="1"/><rect x="946" y="2" width="1" height="1"/><rect x="950" y="2" width="1" height="1"/><rect x="954" y="2" width="1" height="1"/><rect x="958" y="2" width="1" height="1"/></svg>
<div class="t" style="left:273.5px;top:734.8px;font-size:12.5px;line-height:18px;height:18px;color:#f1f1f1;letter-spacing:-0.75px;word-spacing:0.5px;">144 %</div>
<div class="t" style="left:372.0px;top:736.2px;font-size:12px;line-height:17px;height:17px;color:#f1f1f1;">未找到相关问题</div>
<div class="t" style="left:275.8px;top:765.0px;font-size:12px;line-height:17px;height:17px;color:#ffffff;letter-spacing:-0.108px;">输出</div>
</div>

<div id="qtwin" class="abs" style="left:389px;top:136px;width:860px;height:630px;background:#fff;overflow:hidden;">
  <svg style="left:8px;top:7px;" width="15" height="13" viewBox="0 0 15 13">
    <rect x="0.5" y="0.5" width="14" height="12" fill="#fff" stroke="#9a9a9a"/>
    <rect x="2" y="3" width="5" height="7.5" fill="#3c8f80"/>
    <rect x="2" y="3" width="5" height="3.5" fill="#4a7fb0" opacity=".7"/>
    <rect x="8" y="3" width="3" height="7.5" fill="#d8d8d8"/>
    <rect x="12" y="3" width="1.6" height="4" fill="#6f9fc0"/>
  </svg>
  <div class="t" style="left:29px;top:7px;font-size:12.3px;letter-spacing:-0.15px;color:#999;">QOCC建模</div>
  <svg style="left:741px;top:9px;" width="100" height="12" viewBox="0 0 100 12">
    <path d="M0 5.5H10" stroke="#8a8a8a" stroke-width="1" fill="none"/>
    <rect x="45.5" y="0.5" width="9" height="9" stroke="#7a7a7a" stroke-width="1" fill="none"/>
    <path d="M91 0L101 10M101 0L91 10" stroke="#7a7a7a" stroke-width="1" fill="none"/>
  </svg>
  <div class="abs" style="left:0;top:31px;width:860px;height:33px;background:#f0f0f0;border-bottom:1px solid #c4c0b8;box-sizing:border-box;"></div>
  <div class="abs" style="left:3px;top:36px;width:2px;height:24px;background:repeating-linear-gradient(#a8a8a8 0 1px,#f0f0f0 1px 3px);"></div>
<svg style="left:0;top:30px" width="300" height="34" viewBox="389 166 300 34" fill="none">
  <defs>
    <linearGradient id="gshp" x1="0" y1="0" x2="1" y2="0"><stop offset="0" stop-color="#b47e0c"/><stop offset="0.6" stop-color="#e0a21c"/><stop offset="1" stop-color="#e8a820"/></linearGradient>
  </defs>
  <g stroke="#ff9a05" stroke-width="2.4" stroke-linecap="round" stroke-linejoin="round">
    <path d="M404.6 185.4V189.4Q404.6 192.8 408 192.8H419.6Q423 192.8 423 189.4V185.4"/>
    <path d="M413.8 171.8V187M405.8 179L413.8 187.4L421.8 179"/>
    <path d="M436 185.4V189.4Q436 192.8 439.4 192.8H451Q454.4 192.8 454.4 189.4V185.4"/>
    <path d="M445.2 186.4V172.4M437.2 180.6L445.2 172.2L453.2 180.6"/>
  </g>
  <!-- box -->
  <path d="M475.8 172.5L485.9 177.8L475.8 182.8L466.4 177.8Z" fill="#f2b616"/>
  <path d="M466.4 177.8L475.8 182.8V192.9L466.4 187.2Z" fill="#eeb016"/>
  <path d="M485.9 177.8L475.8 182.8V192.9L485.9 187.2Z" fill="#e5930e"/>
  <path d="M475.8 172.5L485.9 177.8V187.2L475.8 192.9L466.4 187.2V177.8Z" stroke="#f5a010" stroke-width="0.8" stroke-linejoin="round"/>
  <!-- cylinder -->
  <path d="M501.3 176V190.6A5.7 3 0 0 0 512.7 190.6V176Z" fill="#f0b414" stroke="#f5a010" stroke-width="0.8"/>
  <ellipse cx="507" cy="176" rx="5.7" ry="3.2" fill="#ead012" stroke="#f5a010" stroke-width="0.8"/>
  <!-- sphere -->
  <circle cx="538" cy="182.7" r="9.7" fill="#f0b414" stroke="#f5a010" stroke-width="0.8"/>
  <path d="M536.4 173.2C533.6 179 534.4 187 538.6 192.2M528.4 183C533 186.6 543 186 547.6 181.4" stroke="#f5a010" stroke-width="0.9"/>
  <!-- cone -->
  <path d="M569.1 171.7L577.8 189.6A8.8 3.9 0 0 1 560.3 189.6Z" fill="#f0b414" stroke="#f5a010" stroke-width="0.8" stroke-linejoin="round"/>
  <path d="M569.1 171.7L565.4 193" stroke="#f5a010" stroke-width="0.7"/>
  <!-- torus -->
  <path fill-rule="evenodd" d="M588.9 182.7A11.3 8.8 0 1 0 611.5 182.7A11.3 8.8 0 1 0 588.9 182.7ZM593.3 183.3A6.9 4.4 0 1 0 607.1 183.3A6.9 4.4 0 1 0 593.3 183.3Z" fill="#f0b414" stroke="#f5a010" stroke-width="0.8"/>
  <!-- custom shape -->
  <path d="M622 174.2V186.2Q629 191.2 636.8 194.7L640 192.4V180.5Q632 175.5 622 174.2Z" fill="url(#gshp)"/>
  <path d="M636.8 182.6V194.7L640 192.4V180.5Z" fill="#d4961a"/>
  <path d="M622 174Q623 172.2 625.2 171.9Q634.6 174 640 180.5Q638.6 182.6 636.8 182.6Q630.6 178.4 622 174.6Z" fill="#c8901a"/>
  <path d="M622.2 174.8Q630.6 178.4 636.8 182.8" stroke="#eaad28" stroke-width="0.9" fill="none"/>
  <ellipse cx="630.9" cy="175.3" rx="1" ry="0.7" fill="#e0a324"/><ellipse cx="630.9" cy="177.5" rx="1.1" ry="0.7" fill="#e0a324"/>
  <!-- L pipe on white -->
  <rect x="650" y="171" width="24" height="24" fill="#ffffff"/>
  <rect x="651" y="172.7" width="10.9" height="4.1" fill="#f5b22e"/>
  <path d="M652.2 178.1H659.4V182.6Q659.4 184.9 661.8 184.9H666.9V191.9H655.6Q652.2 191.9 652.2 188.5Z" fill="#f5b22e"/>
  <rect x="668.1" y="182.3" width="3.8" height="11.1" fill="#f5b22e"/>
</svg>

  <div class="abs" style="left:0;top:64px;width:860px;height:566px;background:linear-gradient(#496ca7,#1c283f);"></div>
</div>
<svg id="scene" style="left:0;top:0;" width="1271" height="787" viewBox="0 0 1271 787">
  <defs>
    <linearGradient id="gside" gradientUnits="userSpaceOnUse" x1="625" y1="0" x2="945" y2="0">
      <stop offset="0" stop-color="#70500d"/><stop offset="0.35" stop-color="#7d5a11"/><stop offset="1" stop-color="#906a16"/>
    </linearGradient>
    <filter color-interpolation-filters="sRGB" id="b1" x="-5%" y="-5%" width="110%" height="110%"><feGaussianBlur stdDeviation="1.6"/></filter>
    <filter color-interpolation-filters="sRGB" id="b2" x="-5%" y="-5%" width="110%" height="110%"><feGaussianBlur stdDeviation="0.8"/></filter>
    <filter color-interpolation-filters="sRGB" id="b3" x="-5%" y="-5%" width="110%" height="110%"><feGaussianBlur stdDeviation="2.6"/></filter>
    <filter color-interpolation-filters="sRGB" id="b4" x="-5%" y="-5%" width="110%" height="110%"><feGaussianBlur stdDeviation="2.8"/></filter>
    <clipPath id="sil"><path id="silp" d="M691.0 241.0 C696.7 244.4 713.5 254.6 725.0 261.5 C736.5 268.4 747.4 274.5 760.0 282.7 C772.6 290.9 787.8 300.9 800.7 310.7 C813.6 320.4 826.3 331.3 837.5 341.2 C848.7 351.1 857.7 359.9 868.0 370.0 C878.3 380.1 890.4 391.9 899.4 401.9 C908.4 411.9 914.8 420.2 922.3 429.9 C929.8 439.6 936.4 448.5 944.5 460.0 C952.6 471.5 963.9 487.2 971.2 498.9 C978.5 510.6 983.8 521.9 988.3 530.0 C992.8 538.1 996.4 544.6 998.0 547.5 Q1002.6 556.5 1003.6 564 L1010 630 L1015.6 687 Q1016 692 1012 696 L964 737.5 Q958 742 951 739 C942.5 734.3 921.6 724.7 900.0 710.7 C878.4 696.7 847.3 676.8 821.2 655.0 C795.1 633.2 761.9 599.1 743.4 580.1 C724.9 561.1 723.3 559.3 710.0 541.2 C696.7 523.1 674.5 488.5 663.8 471.6 C653.1 454.7 649.8 447.6 645.6 440.0 C641.4 432.4 639.7 428.3 638.5 426.0 Q636.8 422 636.5 419 L624.2 300 L623.2 290 Q623 285.5 626.5 282 L677 240.6 Q680 238.6 683 238.6 Q687 238.6 691 241Z"/></clipPath>
    <clipPath id="below"><path d="M900 607 L943 612 L1010 607 L1030 760 L900 760Z"/></clipPath>
  </defs>
  <use href="#silp" fill="#c9941f"/>
  <g clip-path="url(#sil)">
    <path d="M622.5 281.9 C623.7 284.4 625.9 289.6 629.5 296.8 C633.0 304.0 639.1 316.1 643.9 325.2 C648.7 334.3 653.1 342.6 658.3 351.5 C663.5 360.4 667.7 368.2 675.1 378.6 C682.5 389.0 693.1 402.4 702.8 413.8 C712.5 425.1 722.2 435.1 733.1 446.6 C744.0 458.1 756.7 472.3 768.3 482.8 C780.0 493.2 790.4 499.1 803.1 509.3 C815.8 519.6 832.3 534.6 844.6 544.3 C856.9 554.0 865.9 559.7 876.9 567.4 C887.9 575.1 899.7 584.3 910.5 590.7 C921.4 597.1 936.9 603.3 942.2 605.8 L943.2 607.0 L1001.1 563.1 L1017.9 550.0 L1045 700 L960 765 L590 765 L590 270 Z" fill="url(#gside)" filter="url(#b4)"/>
    <g clip-path="url(#below)"><path d="M938 600 L950 600 L963 745 L949 745 Z" fill="#9d761b" filter="url(#b3)"/></g>
    <path d="M629.3 278.7 C630.5 281.2 632.7 286.3 636.2 293.5 C639.7 300.6 645.8 312.6 650.6 321.7 C655.3 330.7 659.7 338.9 664.8 347.7 C669.9 356.5 673.9 364.0 681.2 374.2 C688.5 384.4 698.9 397.7 708.5 408.9 C718.1 420.1 727.8 430.0 738.6 441.4 C749.4 452.8 761.8 466.8 773.3 477.2 C784.9 487.5 795.2 493.3 807.8 503.5 C820.5 513.7 837.0 528.7 849.2 538.4 C861.5 548.0 870.3 553.6 881.2 561.3 C892.0 568.9 908.8 580.4 914.3 584.2 L942.7 599.3" fill="none" stroke="#d29f2c" stroke-width="5" filter="url(#b3)" opacity=".75"/>
    <path d="M943.6 598.6 L992.5 560.4" fill="none" stroke="#d29f2c" stroke-width="5" filter="url(#b3)" opacity=".8"/>
    <path d="M946 597 L991 561" fill="none" stroke="#deae4a" stroke-width="1.6" filter="url(#b2)"/>
    <path d="M905 581 L941 598.6" fill="none" stroke="#d8a73e" stroke-width="1.8" filter="url(#b1)"/>
    <use href="#silp" fill="none" stroke="#7a560e" stroke-width="3" filter="url(#b2)" opacity=".8"/>
  </g>
  <circle cx="942.8" cy="599.4" r="3.4" fill="#f3c060" filter="url(#b2)"/>
  <circle cx="942.8" cy="599.4" r="1.7" fill="#fff6e0"/>
  <defs>
    <clipPath id="holeclip"><ellipse cx="811.1" cy="406" rx="37.4" ry="34.2"/></clipPath>
    <linearGradient id="gwall" gradientUnits="userSpaceOnUse" x1="773" y1="0" x2="849" y2="0">
      <stop offset="0" stop-color="#b18520"/><stop offset="0.45" stop-color="#9b761b"/><stop offset="1" stop-color="#8d6a17"/>
    </linearGradient>
    <linearGradient id="gfloor" gradientUnits="userSpaceOnUse" x1="773" y1="0" x2="849" y2="0">
      <stop offset="0" stop-color="#94701a"/><stop offset="0.5" stop-color="#866314"/><stop offset="1" stop-color="#8b6716"/>
    </linearGradient>
    <linearGradient id="gfade" gradientUnits="userSpaceOnUse" x1="0" y1="398" x2="0" y2="450">
      <stop offset="0" stop-color="#fff" stop-opacity="0.15"/><stop offset="0.55" stop-color="#fff" stop-opacity="0.45"/><stop offset="1" stop-color="#fff" stop-opacity="1"/>
    </linearGradient>
    <mask id="ringmask" maskUnits="userSpaceOnUse" x="760" y="390" width="110" height="80"><rect x="760" y="396" width="110" height="74" fill="url(#gfade)"/></mask>
  </defs>
  <!-- thread ring -->
  <g mask="url(#ringmask)">
    <ellipse cx="811.7" cy="414" rx="42.8" ry="42" fill="#a67b1a"/>
    <ellipse cx="811.7" cy="413.6" rx="42" ry="40.6" fill="none" stroke="#c3932a" stroke-width="1.2" filter="url(#b2)"/>
    <ellipse cx="811.5" cy="412" rx="40.8" ry="37.7" fill="#dcae44"/>
    <ellipse cx="811.3" cy="409.6" rx="39.3" ry="35.2" fill="#8f6c17"/>
  </g>
  <path d="M794 445.6 Q808 449.4 824 445.2" fill="none" stroke="#fff3d0" stroke-width="2.4" filter="url(#b2)"/>
  <path d="M842.6 435.4 L847.6 429.6" stroke="#f0cc78" stroke-width="2" filter="url(#b2)"/>
  <!-- hole -->
  <ellipse cx="811.1" cy="406" rx="37.4" ry="34.2" fill="url(#gwall)"/>
  <g clip-path="url(#holeclip)">
    <ellipse cx="811.6" cy="418.5" rx="37" ry="32" fill="url(#gfloor)"/>
    <path d="M770 408 L776 415.5 L811 441 L780 452 Z" fill="#c39020" filter="url(#b2)"/>
    <ellipse cx="811.6" cy="418.5" rx="37" ry="32" fill="none" stroke="#5e430a" stroke-width="0.8" opacity=".75"/>
  </g>

  <g stroke-linecap="round">
    <path d="M428.3 726 L448 744" stroke="#e01010" stroke-width="2.2"/>
    <path d="M450.2 746.6 L443.6 743.6 L447.4 739.6 Z" fill="#e01010"/>
    <path d="M428.3 726 L449 709.5" stroke="#18c018" stroke-width="2.2"/>
    <path d="M452.2 707 L448.2 713 L445 709 Z" fill="#18c018"/>
    <path d="M427.8 725 L427.6 716" stroke="#0a0ac8" stroke-width="2.6"/>
    <circle cx="427.6" cy="714.6" r="2.4" fill="#0a0ac8"/>
    <circle cx="428.2" cy="726.2" r="2" fill="#e8e8e8"/>
  </g>

</svg>


<div class="t" style="left:1052px;top:755px;font-size:18.8px;letter-spacing:-0.1px;line-height:24px;height:24px;color:#e2e2e2;opacity:.92;text-shadow:1px 1px 1.5px rgba(0,0,0,.75),-0.5px -0.5px 1px rgba(0,0,0,.4);font-family:'Liberation Sans','Noto Sans CJK SC',sans-serif;">CSDN @欧特克_Glodon</div>

</body>
</html>
